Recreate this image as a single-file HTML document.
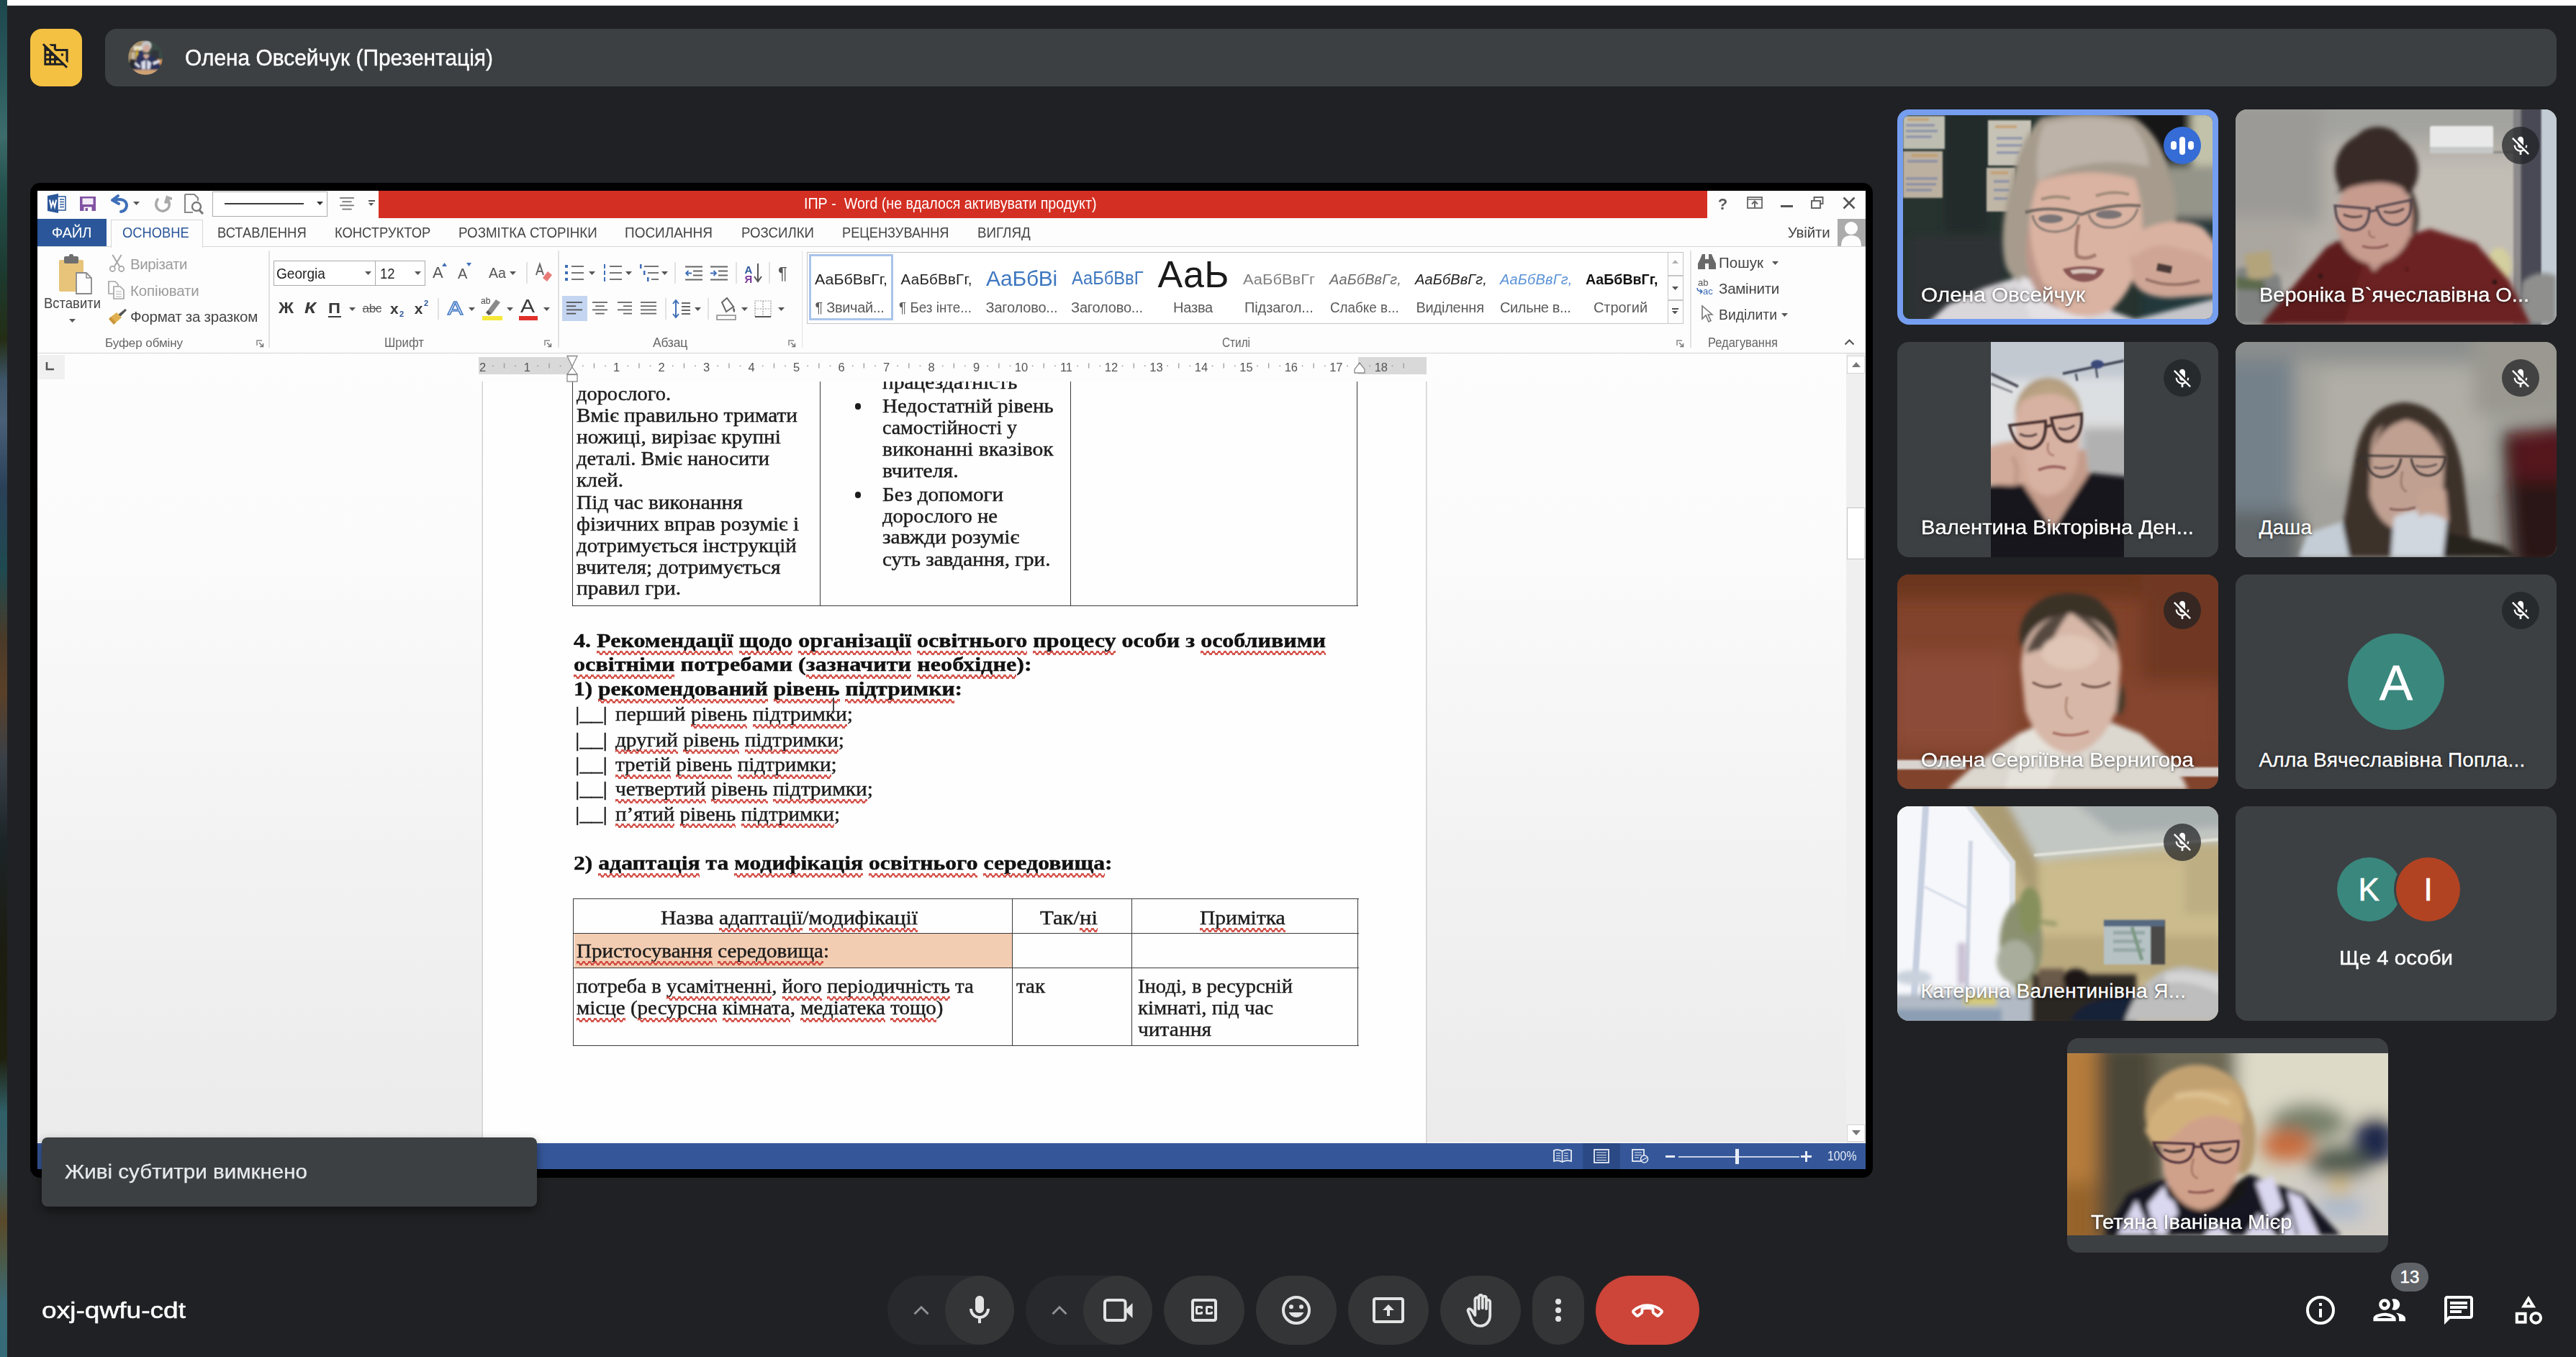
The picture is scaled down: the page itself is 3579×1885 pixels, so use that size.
<!DOCTYPE html>
<html lang="uk"><head><meta charset="utf-8"><title>Meet</title>
<style>
html,body{margin:0;padding:0}
body{width:3579px;height:1885px;background:#202124;position:relative;overflow:hidden;font-family:"Liberation Sans",sans-serif}
.a{position:absolute;display:block}
.t{position:absolute;white-space:nowrap;line-height:1;font-family:"Liberation Sans",sans-serif}
.f{font-family:"Liberation Serif",serif;-webkit-text-stroke:.450px currentColor}
.sq{height:6px;background:linear-gradient(45deg,transparent 37%,#cf3a32 37% 63%,transparent 63%) 0 0/8px 6px repeat-x,linear-gradient(-45deg,transparent 37%,#cf3a32 37% 63%,transparent 63%) 4px 0/8px 6px repeat-x;opacity:.85}
</style></head>
<body>
<div class="a" style="left:0;top:0;width:2640px;height:1700px;filter:blur(.550px)">
<div class="a" style="left:42.0px;top:254.0px;width:2560px;height:1382px;background:#000000;border-radius:14px;"></div>
<div class="a" style="left:52.0px;top:265.0px;width:2540px;height:1359px;background:#fdfdfd;"></div>
<div class="a" style="left:526.0px;top:265.0px;width:1846px;height:38px;background:#d42f23;"></div>
<div class="t" style="top:273.30px;font-size:21.5px;left:1116.50px;color:#ffffff;transform:scaleX(0.9150);transform-origin:0 50%;white-space:pre;">ІПР -  Word (не вдалося активувати продукт)</div>
<svg class="a" style="left:65.0px;top:268.0px;" width="28" height="29" viewBox="0 0 28 29"><path d="M1 4 L16 1 L16 28 L1 25Z" fill="#2b579a"/><rect x="15" y="5" width="11" height="19" fill="#fff" stroke="#2b579a" stroke-width="1.500"/><path d="M18 9h6M18 12.500h6M18 16h6M18 19.500h6" stroke="#2b579a" stroke-width="1.300"/><path d="M4 9.500 L6.200 19.500 L8.600 12 L11 19.500 L13.200 9.500" stroke="#fff" stroke-width="2" fill="none"/></svg>
<svg class="a" style="left:110.0px;top:272.0px;" width="24" height="22" viewBox="0 0 24 22"><path d="M1 1 H23 V21 H1Z" fill="#8152a3"/><rect x="4.500" y="3.500" width="15" height="8.500" fill="#f3ecf7"/><rect x="6.500" y="15.500" width="11" height="5.500" fill="#fdfdfd"/><rect x="8.500" y="17" width="3.500" height="4" fill="#8152a3"/></svg>
<svg class="a" style="left:152.0px;top:269.0px;" width="30" height="28" viewBox="0 0 30 28"><path d="M4 9 L12 3 M4 9 L13 14 M4.500 9 Q24 5 24 17 Q23 24 16 25" fill="none" stroke="#3f6fb8" stroke-width="4" stroke-linecap="round"/></svg>
<svg class="a" style="left:184.5px;top:280.0px;" width="9.0" height="5.0" viewBox="0 0 9.0 5.0"><path d="M0 0 L9.0 0 L4.5 5.0Z" fill="#555"/></svg>
<svg class="a" style="left:213.0px;top:269.0px;" width="26" height="28" viewBox="0 0 26 28"><path d="M19 5 Q19 12 19 12 M6 8 Q1 16 7 22 Q13 27 20 21 Q25 15 19 6 L17 12 M19 5 L25 7" fill="none" stroke="#a9a9a9" stroke-width="3.500" stroke-linecap="round"/></svg>
<svg class="a" style="left:255.0px;top:268.0px;" width="30" height="30" viewBox="0 0 30 30"><path d="M2 2 H15 L20 7 V11 M2 2 V27 H13" fill="none" stroke="#8a8a8a" stroke-width="2.200"/><circle cx="18" cy="19" r="6" fill="none" stroke="#777" stroke-width="2.400"/><path d="M22 24 L27 29" stroke="#777" stroke-width="3"/></svg>
<div class="a" style="left:295.0px;top:265.5px;width:160px;height:35px;background:#ffffff;border:1.500px solid #ababab;box-sizing:border-box;"></div>
<div class="a" style="left:312.0px;top:282.0px;width:110px;height:2px;background:#3a3a3a;"></div>
<svg class="a" style="left:439.5px;top:280.0px;" width="9.0" height="5.0" viewBox="0 0 9.0 5.0"><path d="M0 0 L9.0 0 L4.5 5.0Z" fill="#333"/></svg>
<svg class="a" style="left:471.0px;top:274.0px;" width="22" height="22" viewBox="0 0 22 22"><path d="M1.1 1.0 L20.9 1.0" stroke="#777" stroke-width="1.8"/><path d="M4.4 6.2 L17.6 6.2" stroke="#777" stroke-width="1.8"/><path d="M1.1 11.4 L20.9 11.4" stroke="#777" stroke-width="1.8"/><path d="M4.4 16.6 L17.6 16.6" stroke="#777" stroke-width="1.8"/></svg>
<div class="a" style="left:511.5px;top:278.0px;width:9px;height:1.5px;background:#555;"></div>
<svg class="a" style="left:512.4px;top:282.0px;" width="7.2" height="4.0" viewBox="0 0 7.2 4.0"><path d="M0 0 L7.2 0 L3.6 4.0Z" fill="#555"/></svg>
<div class="t" style="top:273.38px;font-size:22px;left:2386.77px;color:#5a5a5a;font-weight:bold;">?</div>
<svg class="a" style="left:2427.0px;top:273.0px;" width="22" height="17" viewBox="0 0 22 17"><rect x="1" y="1" width="20" height="15" fill="none" stroke="#666" stroke-width="1.800"/><path d="M1 4 H21" stroke="#666" stroke-width="1.500"/><path d="M11 15 V7 M7 10.500 L11 6.500 L15 10.500" fill="none" stroke="#666" stroke-width="2"/></svg>
<div class="a" style="left:2474.0px;top:285.0px;width:17px;height:2.5px;background:#555;"></div>
<svg class="a" style="left:2516.0px;top:273.0px;" width="18" height="17" viewBox="0 0 18 17"><rect x="4.500" y="1" width="12" height="9" fill="none" stroke="#666" stroke-width="2"/><rect x="1" y="6" width="12" height="10" fill="#fdfdfd" stroke="#666" stroke-width="2"/></svg>
<svg class="a" style="left:2560.0px;top:273.0px;" width="18" height="18" viewBox="0 0 18 18"><path d="M1.500 1.500 L16.500 16.500 M16.500 1.500 L1.500 16.500" stroke="#555" stroke-width="2.600"/></svg>
<div class="a" style="left:52.0px;top:304.0px;width:96px;height:38.5px;background:#2b579a;"></div>
<div class="t" style="top:313.15px;font-size:20.5px;left:71.70px;color:#ffffff;letter-spacing:-0.375px;">ФАЙЛ</div>
<div class="a" style="left:52.0px;top:341.5px;width:2540px;height:1.5px;background:#d6d6d6;"></div>
<div class="a" style="left:154.0px;top:305.0px;width:128px;height:38.5px;background:#fdfdfd;border:1.500px solid #d6d6d6;border-bottom:none;box-sizing:border-box;"></div>
<div class="t" style="top:313.15px;font-size:20.5px;left:170.00px;color:#2b579a;transform:scaleX(0.8943);transform-origin:0 50%;">ОСНОВНЕ</div>
<div class="t" style="top:313.15px;font-size:20.5px;left:302.00px;color:#444444;transform:scaleX(0.8988);transform-origin:0 50%;">ВСТАВЛЕННЯ</div>
<div class="t" style="top:313.15px;font-size:20.5px;left:464.80px;color:#444444;transform:scaleX(0.8969);transform-origin:0 50%;">КОНСТРУКТОР</div>
<div class="t" style="top:313.15px;font-size:20.5px;left:637.00px;color:#444444;transform:scaleX(0.9142);transform-origin:0 50%;">РОЗМІТКА СТОРІНКИ</div>
<div class="t" style="top:313.15px;font-size:20.5px;left:868.00px;color:#444444;transform:scaleX(0.9259);transform-origin:0 50%;">ПОСИЛАННЯ</div>
<div class="t" style="top:313.15px;font-size:20.5px;left:1030.00px;color:#444444;transform:scaleX(0.9099);transform-origin:0 50%;">РОЗСИЛКИ</div>
<div class="t" style="top:313.15px;font-size:20.5px;left:1169.60px;color:#444444;transform:scaleX(0.8879);transform-origin:0 50%;">РЕЦЕНЗУВАННЯ</div>
<div class="t" style="top:313.15px;font-size:20.5px;left:1357.90px;color:#444444;transform:scaleX(0.9155);transform-origin:0 50%;">ВИГЛЯД</div>
<div class="t" style="top:313.15px;font-size:20.5px;left:2483.70px;color:#444444;letter-spacing:-0.102px;">Увійти</div>
<svg class="a" style="left:2553.0px;top:304.0px;" width="39" height="38" viewBox="0 0 39 38"><rect width="40" height="38" fill="#ababab"/><circle cx="19" cy="13" r="9" fill="#fdfdfd"/><path d="M5 38 Q5 23 19 23 Q33 23 33 38Z" fill="#fdfdfd"/></svg>
<div class="a" style="left:52.0px;top:489.5px;width:2540px;height:1.5px;background:#d4d4d4;"></div>
<svg class="a" style="left:80.0px;top:353.0px;" width="50" height="56" viewBox="0 0 50 56"><rect x="2" y="8" width="34" height="44" rx="2" fill="#e8c47a"/><rect x="9" y="3" width="20" height="10" rx="2" fill="#6f6f6f"/><rect x="16" y="0" width="6" height="6" rx="2" fill="#6f6f6f"/><path d="M26 26 H40 L47 33 V55 H26Z" fill="#fdfdfd" stroke="#8a8a8a" stroke-width="1.800"/><path d="M40 26 V33 H47" fill="none" stroke="#8a8a8a" stroke-width="1.500"/></svg>
<div class="t" style="top:410.85px;font-size:20.5px;left:61.00px;color:#444444;transform:scaleX(0.9011);transform-origin:0 50%;">Вставити</div>
<svg class="a" style="left:96.0px;top:442.5px;" width="9.0" height="5.0" viewBox="0 0 9.0 5.0"><path d="M0 0 L9.0 0 L4.5 5.0Z" fill="#555"/></svg>
<svg class="a" style="left:150.5px;top:353.0px;" width="23" height="25" viewBox="0 0 26 28"><path d="M6 1 L17 19 M20 1 L9 19" stroke="#a5a5a5" stroke-width="2.200"/><circle cx="6" cy="23" r="4" fill="none" stroke="#a5a5a5" stroke-width="2"/><circle cx="20" cy="23" r="4" fill="none" stroke="#a5a5a5" stroke-width="2"/></svg>
<div class="t" style="top:356.95px;font-size:20.5px;left:181.00px;color:#9b9b9b;letter-spacing:-0.410px;">Вирізати</div>
<svg class="a" style="left:150.0px;top:390.0px;" width="24" height="26" viewBox="0 0 24 26"><path d="M1 1 H10 L14 5 V18 H1Z" fill="#fdfdfd" stroke="#a5a5a5" stroke-width="1.700"/><path d="M8 8 H17 L22 13 V25 H8Z" fill="#fdfdfd" stroke="#a5a5a5" stroke-width="1.700"/><path d="M11 15h8M11 18.500h8M11 22h8" stroke="#b5b5b5" stroke-width="1.200"/></svg>
<div class="t" style="top:394.05px;font-size:20.5px;left:181.00px;color:#9b9b9b;letter-spacing:-0.136px;">Копіювати</div>
<svg class="a" style="left:150.0px;top:428.0px;" width="26" height="24" viewBox="0 0 26 24"><path d="M14 9 L24 1 L26 3 L17 12Z" fill="#555"/><path d="M3 13 L12 6 L19 13 L10 21Z" fill="#e0b050"/><path d="M1 15 L4 12 L11 20 L8 23Z" fill="#c9953a"/></svg>
<div class="t" style="top:429.65px;font-size:20.5px;left:181.00px;color:#444444;letter-spacing:-0.240px;">Формат за зразком</div>
<div class="t" style="top:468.11px;font-size:17px;left:146.00px;color:#666666;letter-spacing:-0.074px;">Буфер обміну</div>
<svg class="a" style="left:355.5px;top:472.0px;" width="11" height="11" viewBox="0 0 11 11"><path d="M1 8 V1 H8" fill="none" stroke="#888" stroke-width="1.500"/><path d="M4 4 L9.500 9.500 M9.500 5 V9.500 H5" fill="none" stroke="#777" stroke-width="1.500"/></svg>
<div class="a" style="left:373.0px;top:348.0px;width:1.5px;height:135px;background:#e2e2e2;"></div>
<div class="a" style="left:380.0px;top:362.0px;width:142.5px;height:35px;background:#ffffff;border:1.500px solid #ababab;box-sizing:border-box;"></div>
<div class="t" style="top:368.72px;font-size:21px;left:384.00px;color:#222;transform:scaleX(0.9101);transform-origin:0 50%;">Georgia</div>
<svg class="a" style="left:507.0px;top:376.5px;" width="9.0" height="5.0" viewBox="0 0 9.0 5.0"><path d="M0 0 L9.0 0 L4.5 5.0Z" fill="#555"/></svg>
<div class="a" style="left:521.0px;top:362.0px;width:70px;height:35px;background:#ffffff;border:1.500px solid #ababab;box-sizing:border-box;"></div>
<div class="t" style="top:368.72px;font-size:21px;left:527.70px;color:#222;transform:scaleX(0.8776);transform-origin:0 50%;">12</div>
<svg class="a" style="left:575.5px;top:376.5px;" width="9.0" height="5.0" viewBox="0 0 9.0 5.0"><path d="M0 0 L9.0 0 L4.5 5.0Z" fill="#555"/></svg>
<div class="t" style="top:368.38px;font-size:22px;left:601.00px;color:#555;">A</div>
<svg class="a" style="left:613.5px;top:365.0px;" width="7" height="5" viewBox="0 0 7 5"><path d="M0 5 L7 5 L3.500 0Z" fill="#3f6fb8"/></svg>
<div class="t" style="top:370.07px;font-size:20px;left:636.00px;color:#555;">A</div>
<svg class="a" style="left:647.5px;top:365.0px;" width="7" height="5" viewBox="0 0 7 5"><path d="M0 0 L7 0 L3.500 5Z" fill="#3f6fb8"/></svg>
<div class="t" style="top:369.15px;font-size:20.5px;left:679.00px;color:#555;transform:scaleX(0.9570);transform-origin:0 50%;">Aa</div>
<svg class="a" style="left:707.5px;top:376.5px;" width="9.0" height="5.0" viewBox="0 0 9.0 5.0"><path d="M0 0 L9.0 0 L4.5 5.0Z" fill="#555"/></svg>
<div class="a" style="left:731.0px;top:364.0px;width:1.5px;height:30px;background:#e2e2e2;"></div>
<svg class="a" style="left:742.0px;top:364.0px;" width="26" height="30" viewBox="0 0 26 30"><path d="M3 18 L8 3 L13 18 M5 13 H11" fill="none" stroke="#666" stroke-width="2"/><path d="M12 22 L19 13 L25 18 L18 27Z" fill="#e87a78"/></svg>
<div class="t" style="top:417.38px;font-size:22px;left:387.00px;color:#3a3a3a;font-weight:bold;transform:scaleX(1.0558);transform-origin:0 50%;">Ж</div>
<div class="t" style="top:417.38px;font-size:22px;left:423.00px;color:#3a3a3a;font-weight:bold;font-style:italic;transform:scaleX(1.1824);transform-origin:0 50%;">К</div>
<div class="t" style="top:416.72px;font-size:21px;left:456.00px;color:#3a3a3a;font-weight:bold;transform:scaleX(1.1263);transform-origin:0 50%;">П</div>
<div class="a" style="left:456.0px;top:438.5px;width:18px;height:2px;background:#3a3a3a;"></div>
<svg class="a" style="left:485.0px;top:426.5px;" width="9.0" height="5.0" viewBox="0 0 9.0 5.0"><path d="M0 0 L9.0 0 L4.5 5.0Z" fill="#555"/></svg>
<div class="t" style="top:419.61px;font-size:17px;left:503.50px;color:#555;letter-spacing:-0.307px;text-decoration:line-through;">abc</div>
<div class="t" style="top:417.72px;font-size:21px;left:542.00px;color:#3a3a3a;font-weight:bold;">x</div>
<div class="t" style="top:430.69px;font-size:11px;left:555.00px;color:#2b579a;font-weight:bold;">2</div>
<div class="t" style="top:417.72px;font-size:21px;left:575.70px;color:#3a3a3a;font-weight:bold;">x</div>
<div class="t" style="top:415.69px;font-size:11px;left:589.00px;color:#2b579a;font-weight:bold;">2</div>
<div class="a" style="left:608.0px;top:414.0px;width:1.5px;height:30px;background:#e2e2e2;"></div>
<div class="t" style="top:414.99px;font-size:26px;left:622.00px;color:#fdfdfd;transform:scaleX(1.2108);transform-origin:0 50%;-webkit-text-stroke:1.500px #4a7fc8;">A</div>
<svg class="a" style="left:650.5px;top:426.5px;" width="9.0" height="5.0" viewBox="0 0 9.0 5.0"><path d="M0 0 L9.0 0 L4.5 5.0Z" fill="#555"/></svg>
<svg class="a" style="left:669.0px;top:412.0px;" width="30" height="34" viewBox="0 0 30 34"><path d="M8 20 L20 4 L26 8 L14 24Z" fill="#8a8a8a"/><path d="M6 22 L9 19 L14 24 L10 26Z" fill="#555"/><rect x="1" y="27" width="28" height="6" fill="#f5e83a"/></svg>
<div class="t" style="top:411.84px;font-size:12px;left:668.00px;color:#444;">ab</div>
<svg class="a" style="left:704.0px;top:426.5px;" width="9.0" height="5.0" viewBox="0 0 9.0 5.0"><path d="M0 0 L9.0 0 L4.5 5.0Z" fill="#555"/></svg>
<div class="t" style="top:412.84px;font-size:25px;left:723.00px;color:#3a3a3a;transform:scaleX(1.1985);transform-origin:0 50%;">A</div>
<div class="a" style="left:721.0px;top:438.5px;width:26px;height:6px;background:#e0302a;"></div>
<svg class="a" style="left:755.2px;top:426.5px;" width="9.0" height="5.0" viewBox="0 0 9.0 5.0"><path d="M0 0 L9.0 0 L4.5 5.0Z" fill="#555"/></svg>
<div class="t" style="top:467.69px;font-size:17.5px;left:533.80px;color:#666666;transform:scaleX(0.9552);transform-origin:0 50%;">Шрифт</div>
<svg class="a" style="left:756.0px;top:472.0px;" width="11" height="11" viewBox="0 0 11 11"><path d="M1 8 V1 H8" fill="none" stroke="#888" stroke-width="1.500"/><path d="M4 4 L9.500 9.500 M9.500 5 V9.500 H5" fill="none" stroke="#777" stroke-width="1.500"/></svg>
<div class="a" style="left:775.0px;top:348.0px;width:1.5px;height:135px;background:#e2e2e2;"></div>
<svg class="a" style="left:785.0px;top:367.0px;" width="27" height="26" viewBox="0 0 27 26"><rect x="0" y="1" width="4" height="4" fill="#3f6fb8"/><path d="M9 3 H26" stroke="#666" stroke-width="1.800"/><rect x="0" y="10" width="4" height="4" fill="#3f6fb8"/><path d="M9 12 H26" stroke="#666" stroke-width="1.800"/><rect x="0" y="19" width="4" height="4" fill="#3f6fb8"/><path d="M9 21 H26" stroke="#666" stroke-width="1.800"/></svg>
<svg class="a" style="left:818.1px;top:376.5px;" width="9.0" height="5.0" viewBox="0 0 9.0 5.0"><path d="M0 0 L9.0 0 L4.5 5.0Z" fill="#555"/></svg>
<svg class="a" style="left:837.5px;top:367.0px;" width="27" height="26" viewBox="0 0 27 26"><rect x="1" y="0" width="2" height="6" fill="#3f6fb8"/><path d="M9 3 H26" stroke="#666" stroke-width="1.800"/><rect x="1" y="9" width="2" height="6" fill="#3f6fb8"/><path d="M9 12 H26" stroke="#666" stroke-width="1.800"/><rect x="1" y="18" width="2" height="6" fill="#3f6fb8"/><path d="M9 21 H26" stroke="#666" stroke-width="1.800"/></svg>
<svg class="a" style="left:869.3px;top:376.5px;" width="9.0" height="5.0" viewBox="0 0 9.0 5.0"><path d="M0 0 L9.0 0 L4.5 5.0Z" fill="#555"/></svg>
<svg class="a" style="left:888.7px;top:367.0px;" width="27" height="26" viewBox="0 0 27 26"><rect x="0" y="0" width="2.500" height="6" fill="#3f6fb8"/><path d="M6 3 H26" stroke="#666" stroke-width="1.800"/><rect x="5" y="9" width="2.500" height="6" fill="#3f6fb8"/><path d="M11 12 H26" stroke="#666" stroke-width="1.800"/><rect x="10" y="18" width="2.500" height="6" fill="#3f6fb8"/><path d="M16 21 H26" stroke="#666" stroke-width="1.800"/></svg>
<svg class="a" style="left:919.2px;top:376.5px;" width="9.0" height="5.0" viewBox="0 0 9.0 5.0"><path d="M0 0 L9.0 0 L4.5 5.0Z" fill="#555"/></svg>
<div class="a" style="left:937.0px;top:364.0px;width:1.5px;height:30px;background:#e2e2e2;"></div>
<svg class="a" style="left:952.0px;top:369.0px;" width="24" height="22" viewBox="0 0 24 22"><path d="M0 1.500 H24 M11 7.500 H24 M11 13.500 H24 M0 19.500 H24" stroke="#666" stroke-width="1.800"/><path d="M9 10.500 H1 M4.500 7 L1 10.500 L4.500 14" fill="none" stroke="#3f6fb8" stroke-width="1.800"/></svg>
<svg class="a" style="left:986.6px;top:369.0px;" width="24" height="22" viewBox="0 0 24 22"><path d="M0 1.500 H24 M11 7.500 H24 M11 13.500 H24 M0 19.500 H24" stroke="#666" stroke-width="1.800"/><path d="M0 10.500 H8 M4.500 7 L8 10.500 L4.500 14" fill="none" stroke="#3f6fb8" stroke-width="1.800"/></svg>
<div class="a" style="left:1022.0px;top:364.0px;width:1.5px;height:30px;background:#e2e2e2;"></div>
<div class="t" style="top:367.30px;font-size:15px;left:1034.60px;color:#2b579a;font-weight:bold;">A</div>
<div class="t" style="top:380.30px;font-size:15px;left:1034.60px;color:#7a3a9a;font-weight:bold;">Я</div>
<svg class="a" style="left:1047.0px;top:365.0px;" width="12" height="28" viewBox="0 0 12 28"><path d="M6 1 V25 M1 19 L6 26 L11 19" fill="none" stroke="#555" stroke-width="2"/></svg>
<div class="a" style="left:1068.0px;top:364.0px;width:1.5px;height:30px;background:#e2e2e2;"></div>
<div class="t" style="top:367.68px;font-size:24px;left:1081.00px;color:#555;">¶</div>
<div class="a" style="left:781.0px;top:411.0px;width:35px;height:35px;background:#c3d5f0;"></div>
<svg class="a" style="left:787.0px;top:419.0px;" width="22" height="22" viewBox="0 0 22 22"><path d="M0.0 1.0 L22.0 1.0" stroke="#555" stroke-width="1.8"/><path d="M0.0 6.2 L13.2 6.2" stroke="#555" stroke-width="1.8"/><path d="M0.0 11.4 L22.0 11.4" stroke="#555" stroke-width="1.8"/><path d="M0.0 16.6 L13.2 16.6" stroke="#555" stroke-width="1.8"/></svg>
<svg class="a" style="left:822.6px;top:419.0px;" width="21" height="22" viewBox="0 0 21 22"><path d="M0.0 1.0 L21.0 1.0" stroke="#666" stroke-width="1.8"/><path d="M4.2 6.2 L16.8 6.2" stroke="#666" stroke-width="1.8"/><path d="M0.0 11.4 L21.0 11.4" stroke="#666" stroke-width="1.8"/><path d="M4.2 16.6 L16.8 16.6" stroke="#666" stroke-width="1.8"/></svg>
<svg class="a" style="left:857.5px;top:419.0px;" width="20" height="22" viewBox="0 0 20 22"><path d="M0.0 1.0 L20.0 1.0" stroke="#666" stroke-width="1.8"/><path d="M8.0 6.2 L20.0 6.2" stroke="#666" stroke-width="1.8"/><path d="M0.0 11.4 L20.0 11.4" stroke="#666" stroke-width="1.8"/><path d="M8.0 16.6 L20.0 16.6" stroke="#666" stroke-width="1.8"/></svg>
<svg class="a" style="left:890.0px;top:419.0px;" width="22" height="22" viewBox="0 0 22 22"><path d="M0.0 1.0 L22.0 1.0" stroke="#666" stroke-width="1.8"/><path d="M0.0 6.2 L22.0 6.2" stroke="#666" stroke-width="1.8"/><path d="M0.0 11.4 L22.0 11.4" stroke="#666" stroke-width="1.8"/><path d="M0.0 16.6 L22.0 16.6" stroke="#666" stroke-width="1.8"/></svg>
<div class="a" style="left:924.0px;top:414.0px;width:1.5px;height:30px;background:#e2e2e2;"></div>
<svg class="a" style="left:934.0px;top:415.0px;" width="26" height="28" viewBox="0 0 26 28"><path d="M5 3 V25 M1 7 L5 2 L9 7 M1 21 L5 26 L9 21" fill="none" stroke="#3f6fb8" stroke-width="2"/><path d="M13 6h12M13 11h12M13 16h12M13 21h12" stroke="#666" stroke-width="1.800"/></svg>
<svg class="a" style="left:964.5px;top:426.5px;" width="9.0" height="5.0" viewBox="0 0 9.0 5.0"><path d="M0 0 L9.0 0 L4.5 5.0Z" fill="#555"/></svg>
<div class="a" style="left:983.0px;top:414.0px;width:1.5px;height:30px;background:#e2e2e2;"></div>
<svg class="a" style="left:995.0px;top:412.0px;" width="30" height="34" viewBox="0 0 30 34"><path d="M8 8 L15 2 L24 14 L14 21Z" fill="#fdfdfd" stroke="#666" stroke-width="2"/><path d="M24 14 Q28 20 25 22 Q22 20 24 14" fill="#666"/><rect x="1" y="26" width="26" height="6" fill="#fdfdfd" stroke="#888" stroke-width="1.500"/></svg>
<svg class="a" style="left:1030.1px;top:426.5px;" width="9.0" height="5.0" viewBox="0 0 9.0 5.0"><path d="M0 0 L9.0 0 L4.5 5.0Z" fill="#555"/></svg>
<svg class="a" style="left:1048.0px;top:417.0px;" width="24" height="24" viewBox="0 0 24 24"><rect x="1" y="1" width="22" height="22" fill="none" stroke="#999" stroke-width="1.200" stroke-dasharray="2 1.500"/><path d="M12 1 V23 M1 12 H23" stroke="#999" stroke-width="1.200" stroke-dasharray="2 1.500"/><path d="M1 23 H23" stroke="#555" stroke-width="2"/></svg>
<svg class="a" style="left:1081.3px;top:426.5px;" width="9.0" height="5.0" viewBox="0 0 9.0 5.0"><path d="M0 0 L9.0 0 L4.5 5.0Z" fill="#555"/></svg>
<div class="t" style="top:467.69px;font-size:17.5px;left:907.00px;color:#666666;letter-spacing:-0.219px;">Абзац</div>
<svg class="a" style="left:1094.8px;top:472.0px;" width="11" height="11" viewBox="0 0 11 11"><path d="M1 8 V1 H8" fill="none" stroke="#888" stroke-width="1.500"/><path d="M4 4 L9.500 9.500 M9.500 5 V9.500 H5" fill="none" stroke="#777" stroke-width="1.500"/></svg>
<div class="a" style="left:1113.7px;top:348.0px;width:1.5px;height:135px;background:#e2e2e2;"></div>
<div class="a" style="left:1120.5px;top:350.0px;width:1218px;height:100px;background:#ffffff;border:1.500px solid #c6c6c6;box-sizing:border-box;"></div>
<div class="a" style="left:1123.5px;top:353.0px;width:117px;height:92px;background:#ffffff;border:3px solid #a9c4ea;box-sizing:border-box;"></div>
<div class="t" style="top:377.65px;font-size:20.5px;left:1132.00px;color:#222;transform:scaleX(1.0429);transform-origin:0 50%;">АаБбВвГг,</div>
<div class="t" style="top:417.07px;font-size:20px;left:1132.50px;color:#5a5a5a;letter-spacing:-0.324px;">¶ Звичай...</div>
<div class="t" style="top:377.65px;font-size:20.5px;left:1251.60px;color:#222;letter-spacing:0.240px;">АаБбВвГг,</div>
<div class="t" style="top:417.07px;font-size:20px;left:1249.00px;color:#5a5a5a;transform:scaleX(0.9434);transform-origin:0 50%;">¶ Без інте...</div>
<div class="t" style="top:371.61px;font-size:30px;left:1370.00px;color:#3f78c0;letter-spacing:-0.263px;">АаБбВі</div>
<div class="t" style="top:417.07px;font-size:20px;left:1369.50px;color:#5a5a5a;letter-spacing:-0.178px;">Заголово...</div>
<div class="t" style="top:373.84px;font-size:25px;left:1489.00px;color:#3f78c0;transform:scaleX(0.9469);transform-origin:0 50%;">АаБбВвГ</div>
<div class="t" style="top:417.07px;font-size:20px;left:1488.00px;color:#5a5a5a;letter-spacing:-0.178px;">Заголово...</div>
<div class="t" style="top:354.98px;font-size:52px;left:1608.60px;color:#1a1a1a;letter-spacing:0.229px;">АаЬ</div>
<div class="t" style="top:417.07px;font-size:20px;left:1630.00px;color:#5a5a5a;letter-spacing:-0.209px;">Назва</div>
<div class="t" style="top:377.65px;font-size:20.5px;left:1727.00px;color:#808080;transform:scaleX(1.0677);transform-origin:0 50%;">АаБбВвГг</div>
<div class="t" style="top:417.07px;font-size:20px;left:1729.00px;color:#5a5a5a;letter-spacing:-0.097px;">Підзагол...</div>
<div class="t" style="top:378.07px;font-size:20px;left:1847.00px;color:#6a6a6a;font-style:italic;letter-spacing:0.110px;">АаБбВвГг,</div>
<div class="t" style="top:417.07px;font-size:20px;left:1848.00px;color:#5a5a5a;transform:scaleX(0.9406);transform-origin:0 50%;">Слабке в...</div>
<div class="t" style="top:378.07px;font-size:20px;left:1966.00px;color:#222;font-style:italic;letter-spacing:0.132px;">АаБбВвГг,</div>
<div class="t" style="top:417.07px;font-size:20px;left:1967.40px;color:#5a5a5a;letter-spacing:-0.216px;">Виділення</div>
<div class="t" style="top:378.07px;font-size:20px;left:2084.00px;color:#5a92d6;font-style:italic;letter-spacing:0.188px;">АаБбВвГг,</div>
<div class="t" style="top:417.07px;font-size:20px;left:2084.00px;color:#5a5a5a;letter-spacing:-0.385px;">Сильне в...</div>
<div class="t" style="top:377.65px;font-size:20.5px;left:2203.00px;color:#111;font-weight:bold;transform:scaleX(0.9542);transform-origin:0 50%;">АаБбВвГг,</div>
<div class="t" style="top:417.07px;font-size:20px;left:2214.00px;color:#5a5a5a;letter-spacing:-0.071px;">Строгий</div>
<div class="a" style="left:2316.5px;top:350.0px;width:22px;height:33.4px;background:#fdfdfd;border:1.500px solid #c6c6c6;box-sizing:border-box;"></div>
<div class="a" style="left:2316.5px;top:383.3px;width:22px;height:33.4px;background:#fdfdfd;border:1.500px solid #c6c6c6;box-sizing:border-box;"></div>
<div class="a" style="left:2316.5px;top:416.6px;width:22px;height:33.4px;background:#fdfdfd;border:1.500px solid #c6c6c6;box-sizing:border-box;"></div>
<svg class="a" style="left:2323.0px;top:361.0px;" width="9" height="5" viewBox="0 0 9 5"><path d="M0 5 L9 5 L4.500 0Z" fill="#b0b0b0"/></svg>
<svg class="a" style="left:2323.0px;top:397.5px;" width="9.0" height="5.0" viewBox="0 0 9.0 5.0"><path d="M0 0 L9.0 0 L4.5 5.0Z" fill="#555"/></svg>
<div class="a" style="left:2323.0px;top:428.0px;width:9px;height:1.5px;background:#555;"></div>
<svg class="a" style="left:2323.45px;top:431.75px;" width="8.1" height="4.5" viewBox="0 0 8.1 4.5"><path d="M0 0 L8.1 0 L4.05 4.5Z" fill="#555"/></svg>
<div class="t" style="top:467.69px;font-size:17.5px;left:1697.70px;color:#666666;transform:scaleX(0.8758);transform-origin:0 50%;">Стилі</div>
<svg class="a" style="left:2329.4px;top:472.0px;" width="11" height="11" viewBox="0 0 11 11"><path d="M1 8 V1 H8" fill="none" stroke="#888" stroke-width="1.500"/><path d="M4 4 L9.500 9.500 M9.500 5 V9.500 H5" fill="none" stroke="#777" stroke-width="1.500"/></svg>
<div class="a" style="left:2348.0px;top:348.0px;width:1.5px;height:135px;background:#e2e2e2;"></div>
<svg class="a" style="left:2358.0px;top:352.0px;" width="27" height="24" viewBox="0 0 27 24"><path d="M4 8 L7 1 H11 V22 H1 V14Z M23 8 L20 1 H16 V22 H26 V14Z" fill="#6a6a6a"/><rect x="11" y="8" width="5" height="6" fill="#6a6a6a"/></svg>
<div class="t" style="top:355.15px;font-size:20.5px;left:2388.00px;color:#444444;letter-spacing:0.037px;">Пошук</div>
<svg class="a" style="left:2461.5px;top:362.5px;" width="9.0" height="5.0" viewBox="0 0 9.0 5.0"><path d="M0 0 L9.0 0 L4.5 5.0Z" fill="#555"/></svg>
<div class="t" style="top:386.00px;font-size:13px;left:2359.00px;color:#555;">ab</div>
<div class="t" style="top:398.00px;font-size:13px;left:2366.00px;color:#3f6fb8;">ac</div>
<svg class="a" style="left:2357.0px;top:399.0px;" width="10" height="10" viewBox="0 0 10 10"><path d="M1 1 Q1 6 8 6 M5 3 L8 6 L5 9" fill="none" stroke="#3f6fb8" stroke-width="1.500"/></svg>
<div class="t" style="top:391.15px;font-size:20.5px;left:2388.00px;color:#444444;letter-spacing:-0.256px;">Замінити</div>
<svg class="a" style="left:2363.0px;top:423.0px;" width="18" height="26" viewBox="0 0 18 26"><path d="M2 2 L2 20 L7 15 L11 24 L14 22.500 L10 14 L16 14Z" fill="#fdfdfd" stroke="#777" stroke-width="1.600"/></svg>
<div class="t" style="top:426.65px;font-size:20.5px;left:2388.00px;color:#444444;transform:scaleX(0.9429);transform-origin:0 50%;">Виділити</div>
<svg class="a" style="left:2474.5px;top:434.5px;" width="9.0" height="5.0" viewBox="0 0 9.0 5.0"><path d="M0 0 L9.0 0 L4.5 5.0Z" fill="#555"/></svg>
<div class="t" style="top:467.69px;font-size:17.5px;left:2373.00px;color:#666666;transform:scaleX(0.9420);transform-origin:0 50%;">Редагування</div>
<svg class="a" style="left:2562.0px;top:470.0px;" width="15" height="10" viewBox="0 0 15 10"><path d="M1.500 8.500 L7.500 2.500 L13.500 8.500" fill="none" stroke="#555" stroke-width="2.200"/></svg>
<div class="a" style="left:52.0px;top:491.0px;width:2540px;height:1096px;background:linear-gradient(180deg,#fdfdfd 0,#fbfbfb 25%,#f3f3f3 60%,#ebebeb 100%);"></div>
<div class="a" style="left:52.0px;top:493.0px;width:38px;height:34px;background:#f0f0f0;"></div>
<svg class="a" style="left:61.0px;top:501.0px;" width="16" height="16" viewBox="0 0 16 16"><path d="M4 2 V12 H14" fill="none" stroke="#555" stroke-width="2.600"/></svg>
<div class="a" style="left:665.0px;top:496.0px;width:1317px;height:24px;background:#d9d9d9;"></div>
<div class="a" style="left:795.0px;top:496.0px;width:1092px;height:24px;background:#fdfdfd;"></div>
<div class="t" style="top:502.03px;font-size:16.5px;left:666.01px;color:#555;">2</div>
<div class="t" style="top:502.03px;font-size:16.5px;left:727.81px;color:#555;">1</div>
<div class="t" style="top:502.03px;font-size:16.5px;left:852.09px;color:#555;">1</div>
<div class="t" style="top:502.03px;font-size:16.5px;left:914.57px;color:#555;">2</div>
<div class="t" style="top:502.03px;font-size:16.5px;left:977.05px;color:#555;">3</div>
<div class="t" style="top:502.03px;font-size:16.5px;left:1039.53px;color:#555;">4</div>
<div class="t" style="top:502.03px;font-size:16.5px;left:1102.01px;color:#555;">5</div>
<div class="t" style="top:502.03px;font-size:16.5px;left:1164.49px;color:#555;">6</div>
<div class="t" style="top:502.03px;font-size:16.5px;left:1226.97px;color:#555;">7</div>
<div class="t" style="top:502.03px;font-size:16.5px;left:1289.45px;color:#555;">8</div>
<div class="t" style="top:502.03px;font-size:16.5px;left:1351.93px;color:#555;">9</div>
<div class="t" style="top:502.03px;font-size:16.5px;left:1409.82px;color:#555;">10</div>
<div class="t" style="top:502.03px;font-size:16.5px;left:1472.91px;color:#555;">11</div>
<div class="t" style="top:502.03px;font-size:16.5px;left:1534.78px;color:#555;">12</div>
<div class="t" style="top:502.03px;font-size:16.5px;left:1597.26px;color:#555;">13</div>
<div class="t" style="top:502.03px;font-size:16.5px;left:1659.74px;color:#555;">14</div>
<div class="t" style="top:502.03px;font-size:16.5px;left:1722.22px;color:#555;">15</div>
<div class="t" style="top:502.03px;font-size:16.5px;left:1784.70px;color:#555;">16</div>
<div class="t" style="top:502.03px;font-size:16.5px;left:1847.18px;color:#555;">17</div>
<div class="t" style="top:502.03px;font-size:16.5px;left:1909.66px;color:#555;">18</div>
<svg class="a" style="left:665.0px;top:496.0px;" width="1317" height="24" viewBox="0 0 1317 24"><rect x="19.1" y="11.500" width="1.600" height="1.600" fill="#9a9a9a"/><rect x="34.9" y="8.500" width="1.300" height="7" fill="#9a9a9a"/><rect x="50.3" y="11.500" width="1.600" height="1.600" fill="#9a9a9a"/><rect x="81.5" y="11.500" width="1.600" height="1.600" fill="#9a9a9a"/><rect x="97.4" y="8.500" width="1.300" height="7" fill="#9a9a9a"/><rect x="112.8" y="11.500" width="1.600" height="1.600" fill="#9a9a9a"/><rect x="144.0" y="11.500" width="1.600" height="1.600" fill="#9a9a9a"/><rect x="159.8" y="8.500" width="1.300" height="7" fill="#9a9a9a"/><rect x="175.3" y="11.500" width="1.600" height="1.600" fill="#9a9a9a"/><rect x="206.5" y="11.500" width="1.600" height="1.600" fill="#9a9a9a"/><rect x="222.3" y="8.500" width="1.300" height="7" fill="#9a9a9a"/><rect x="237.7" y="11.500" width="1.600" height="1.600" fill="#9a9a9a"/><rect x="269.0" y="11.500" width="1.600" height="1.600" fill="#9a9a9a"/><rect x="284.8" y="8.500" width="1.300" height="7" fill="#9a9a9a"/><rect x="300.2" y="11.500" width="1.600" height="1.600" fill="#9a9a9a"/><rect x="331.5" y="11.500" width="1.600" height="1.600" fill="#9a9a9a"/><rect x="347.3" y="8.500" width="1.300" height="7" fill="#9a9a9a"/><rect x="362.7" y="11.500" width="1.600" height="1.600" fill="#9a9a9a"/><rect x="393.9" y="11.500" width="1.600" height="1.600" fill="#9a9a9a"/><rect x="409.8" y="8.500" width="1.300" height="7" fill="#9a9a9a"/><rect x="425.2" y="11.500" width="1.600" height="1.600" fill="#9a9a9a"/><rect x="456.4" y="11.500" width="1.600" height="1.600" fill="#9a9a9a"/><rect x="472.2" y="8.500" width="1.300" height="7" fill="#9a9a9a"/><rect x="487.7" y="11.500" width="1.600" height="1.600" fill="#9a9a9a"/><rect x="518.9" y="11.500" width="1.600" height="1.600" fill="#9a9a9a"/><rect x="534.7" y="8.500" width="1.300" height="7" fill="#9a9a9a"/><rect x="550.1" y="11.500" width="1.600" height="1.600" fill="#9a9a9a"/><rect x="581.4" y="11.500" width="1.600" height="1.600" fill="#9a9a9a"/><rect x="597.2" y="8.500" width="1.300" height="7" fill="#9a9a9a"/><rect x="612.6" y="11.500" width="1.600" height="1.600" fill="#9a9a9a"/><rect x="643.9" y="11.500" width="1.600" height="1.600" fill="#9a9a9a"/><rect x="659.7" y="8.500" width="1.300" height="7" fill="#9a9a9a"/><rect x="675.1" y="11.500" width="1.600" height="1.600" fill="#9a9a9a"/><rect x="706.3" y="11.500" width="1.600" height="1.600" fill="#9a9a9a"/><rect x="722.2" y="8.500" width="1.300" height="7" fill="#9a9a9a"/><rect x="737.6" y="11.500" width="1.600" height="1.600" fill="#9a9a9a"/><rect x="768.8" y="11.500" width="1.600" height="1.600" fill="#9a9a9a"/><rect x="784.6" y="8.500" width="1.300" height="7" fill="#9a9a9a"/><rect x="800.1" y="11.500" width="1.600" height="1.600" fill="#9a9a9a"/><rect x="831.3" y="11.500" width="1.600" height="1.600" fill="#9a9a9a"/><rect x="847.1" y="8.500" width="1.300" height="7" fill="#9a9a9a"/><rect x="862.5" y="11.500" width="1.600" height="1.600" fill="#9a9a9a"/><rect x="893.8" y="11.500" width="1.600" height="1.600" fill="#9a9a9a"/><rect x="909.6" y="8.500" width="1.300" height="7" fill="#9a9a9a"/><rect x="925.0" y="11.500" width="1.600" height="1.600" fill="#9a9a9a"/><rect x="956.3" y="11.500" width="1.600" height="1.600" fill="#9a9a9a"/><rect x="972.1" y="8.500" width="1.300" height="7" fill="#9a9a9a"/><rect x="987.5" y="11.500" width="1.600" height="1.600" fill="#9a9a9a"/><rect x="1018.7" y="11.500" width="1.600" height="1.600" fill="#9a9a9a"/><rect x="1034.6" y="8.500" width="1.300" height="7" fill="#9a9a9a"/><rect x="1050.0" y="11.500" width="1.600" height="1.600" fill="#9a9a9a"/><rect x="1081.2" y="11.500" width="1.600" height="1.600" fill="#9a9a9a"/><rect x="1097.0" y="8.500" width="1.300" height="7" fill="#9a9a9a"/><rect x="1112.5" y="11.500" width="1.600" height="1.600" fill="#9a9a9a"/><rect x="1143.7" y="11.500" width="1.600" height="1.600" fill="#9a9a9a"/><rect x="1159.5" y="8.500" width="1.300" height="7" fill="#9a9a9a"/><rect x="1174.9" y="11.500" width="1.600" height="1.600" fill="#9a9a9a"/><rect x="1206.2" y="11.500" width="1.600" height="1.600" fill="#9a9a9a"/><rect x="1222.0" y="8.500" width="1.300" height="7" fill="#9a9a9a"/><rect x="1237.4" y="11.500" width="1.600" height="1.600" fill="#9a9a9a"/><rect x="1268.7" y="11.500" width="1.600" height="1.600" fill="#9a9a9a"/><rect x="1284.5" y="8.500" width="1.300" height="7" fill="#9a9a9a"/></svg>
<div class="a" style="left:2565.0px;top:491.0px;width:27px;height:1098px;background:#efefef;"></div>
<div class="a" style="left:2566.0px;top:493.5px;width:24.5px;height:25px;background:#ffffff;border:1.500px solid #d4d4d4;box-sizing:border-box;"></div>
<svg class="a" style="left:2572.5px;top:503.0px;" width="12" height="7" viewBox="0 0 12 7"><path d="M0 7 L12 7 L6 0Z" fill="#777"/></svg>
<div class="a" style="left:2566.0px;top:705.0px;width:24.5px;height:72px;background:#ffffff;border:1.500px solid #c6c6c6;box-sizing:border-box;"></div>
<div class="a" style="left:2566.0px;top:1561.5px;width:24.5px;height:24px;background:#ffffff;border:1.500px solid #d4d4d4;box-sizing:border-box;"></div>
<svg class="a" style="left:2572.5px;top:1570.0px;" width="12" height="7" viewBox="0 0 12 7"><path d="M0 0 L12 0 L6 7Z" fill="#777"/></svg>
<div class="a" style="left:52.0px;top:530.0px;width:2513px;height:1059px;overflow:hidden;">
<div class="a" style="left:619px;top:-20px;width:1310px;height:1080px;background:#fefefe;box-shadow:0 0 0 1.500px #d2d2d2;"></div>
<div class="a" style="left:743px;top:0px;width:1.3px;height:312px;background:#3a3a3a;"></div>
<div class="a" style="left:1087px;top:0px;width:1.3px;height:312px;background:#3a3a3a;"></div>
<div class="a" style="left:1435px;top:0px;width:1.3px;height:312px;background:#3a3a3a;"></div>
<div class="a" style="left:1833px;top:0px;width:1.3px;height:312px;background:#3a3a3a;"></div>
<div class="a" style="left:743px;top:310.5px;width:1091.8px;height:1.3px;background:#3a3a3a;"></div>
<div class="t f" style="top:2.88px;font-size:28.2px;left:749.00px;color:#1c1c1c;transform:scaleX(1.0077);transform-origin:0 50%;">дорослого.</div>
<div class="t f" style="top:33.38px;font-size:28.2px;left:749.00px;color:#1c1c1c;transform:scaleX(1.0389);transform-origin:0 50%;">Вміє правильно тримати</div>
<div class="t f" style="top:63.38px;font-size:28.2px;left:749.00px;color:#1c1c1c;transform:scaleX(1.0415);transform-origin:0 50%;">ножиці, вирізає крупні</div>
<div class="t f" style="top:93.18px;font-size:28.2px;left:749.00px;color:#1c1c1c;transform:scaleX(1.0138);transform-origin:0 50%;">деталі. Вміє наносити</div>
<div class="t f" style="top:123.28px;font-size:28.2px;left:749.00px;color:#1c1c1c;transform:scaleX(1.0416);transform-origin:0 50%;">клей.</div>
<div class="t f" style="top:153.68px;font-size:28.2px;left:749.00px;color:#1c1c1c;transform:scaleX(1.0424);transform-origin:0 50%;">Під час виконання</div>
<div class="t f" style="top:183.88px;font-size:28.2px;left:749.00px;color:#1c1c1c;transform:scaleX(1.0360);transform-origin:0 50%;">фізичних вправ розуміє і</div>
<div class="t f" style="top:213.88px;font-size:28.2px;left:749.00px;color:#1c1c1c;transform:scaleX(1.0216);transform-origin:0 50%;">дотримується інструкцій</div>
<div class="t f" style="top:243.68px;font-size:28.2px;left:749.00px;color:#1c1c1c;transform:scaleX(1.0391);transform-origin:0 50%;">вчителя; дотримується</div>
<div class="t f" style="top:273.38px;font-size:28.2px;left:749.00px;color:#1c1c1c;transform:scaleX(1.0433);transform-origin:0 50%;">правил гри.</div>
<div class="t f" style="top:-12.62px;font-size:28.2px;left:1174.00px;color:#1c1c1c;transform:scaleX(1.0458);transform-origin:0 50%;">працездатність</div>
<div class="t f" style="top:20.38px;font-size:28.2px;left:1174.00px;color:#1c1c1c;transform:scaleX(1.0264);transform-origin:0 50%;">Недостатній рівень</div>
<div class="a" style="left:1135.5px;top:30px;width:8.5px;height:8.5px;background:#1c1c1c;border-radius:50%;"></div>
<div class="t f" style="top:50.38px;font-size:28.2px;left:1174.00px;color:#1c1c1c;transform:scaleX(0.9871);transform-origin:0 50%;">самостійності у</div>
<div class="t f" style="top:79.98px;font-size:28.2px;left:1174.00px;color:#1c1c1c;transform:scaleX(1.0497);transform-origin:0 50%;">виконанні вказівок</div>
<div class="t f" style="top:110.08px;font-size:28.2px;left:1174.00px;color:#1c1c1c;transform:scaleX(1.0517);transform-origin:0 50%;">вчителя.</div>
<div class="t f" style="top:143.38px;font-size:28.2px;left:1174.00px;color:#1c1c1c;transform:scaleX(1.0314);transform-origin:0 50%;">Без допомоги</div>
<div class="a" style="left:1135.5px;top:153px;width:8.5px;height:8.5px;background:#1c1c1c;border-radius:50%;"></div>
<div class="t f" style="top:172.68px;font-size:28.2px;left:1174.00px;color:#1c1c1c;transform:scaleX(1.0153);transform-origin:0 50%;">дорослого не</div>
<div class="t f" style="top:202.38px;font-size:28.2px;left:1174.00px;color:#1c1c1c;transform:scaleX(1.0422);transform-origin:0 50%;">завжди розуміє</div>
<div class="t f" style="top:232.88px;font-size:28.2px;left:1174.00px;color:#1c1c1c;transform:scaleX(1.0301);transform-origin:0 50%;">суть завдання, гри.</div>
<div class="t f" style="top:346.38px;font-size:28.2px;left:744.80px;color:#111;font-weight:bold;transform:scaleX(1.1363);transform-origin:0 50%;">4. Рекомендації щодо організації освітнього процесу особи з особливими</div>
<div class="t f" style="top:379.38px;font-size:28.2px;left:744.80px;color:#111;font-weight:bold;transform:scaleX(1.1425);transform-origin:0 50%;">освітніми потребами (зазначити необхідне):</div>
<div class="t f" style="top:413.38px;font-size:28.2px;left:744.80px;color:#111;font-weight:bold;transform:scaleX(1.1162);transform-origin:0 50%;">1) рекомендований рівень підтримки:</div>
<div class="a sq" style="left:776.8px;top:374.0px;width:189.7px"></div>
<div class="a sq" style="left:974.6px;top:374.0px;width:74.3px"></div>
<div class="a sq" style="left:1056.9px;top:374.0px;width:156.9px"></div>
<div class="a sq" style="left:1221.8px;top:374.0px;width:153.3px"></div>
<div class="a sq" style="left:1383.1px;top:374.0px;width:115.2px"></div>
<div class="a sq" style="left:1615.9px;top:374.0px;width:173.9px"></div>
<div class="a sq" style="left:744.8px;top:407.0px;width:140.6px"></div>
<div class="a sq" style="left:1067.5px;top:407.0px;width:146.5px"></div>
<div class="a sq" style="left:1222.0px;top:407.0px;width:138.0px"></div>
<div class="a sq" style="left:778.9px;top:441.0px;width:235.8px"></div>
<div class="a sq" style="left:1022.6px;top:441.0px;width:92.0px"></div>
<div class="a sq" style="left:1122.4px;top:441.0px;width:151.9px"></div>
<div class="t f" style="top:448.38px;font-size:28.2px;left:747.00px;color:#1c1c1c;transform:scaleX(1.1397);transform-origin:0 50%;">|__|</div>
<div class="t f" style="top:448.38px;font-size:28.2px;left:803.00px;color:#1c1c1c;transform:scaleX(1.0419);transform-origin:0 50%;">перший рівень підтримки;</div>
<div class="a sq" style="left:907.8px;top:476.0px;width:78.7px"></div>
<div class="a sq" style="left:993.9px;top:476.0px;width:131.0px"></div>
<div class="t f" style="top:483.78px;font-size:28.2px;left:747.00px;color:#1c1c1c;transform:scaleX(1.1397);transform-origin:0 50%;">|__|</div>
<div class="t f" style="top:483.78px;font-size:28.2px;left:803.00px;color:#1c1c1c;transform:scaleX(1.0356);transform-origin:0 50%;">другий рівень підтримки;</div>
<div class="a sq" style="left:803.0px;top:511.4px;width:86.9px"></div>
<div class="a sq" style="left:897.2px;top:511.4px;width:78.2px"></div>
<div class="a sq" style="left:982.7px;top:511.4px;width:130.2px"></div>
<div class="t f" style="top:518.08px;font-size:28.2px;left:747.00px;color:#1c1c1c;transform:scaleX(1.1397);transform-origin:0 50%;">|__|</div>
<div class="t f" style="top:518.08px;font-size:28.2px;left:803.00px;color:#1c1c1c;transform:scaleX(1.0337);transform-origin:0 50%;">третій рівень підтримки;</div>
<div class="a sq" style="left:803.0px;top:545.7px;width:77.0px"></div>
<div class="a sq" style="left:887.3px;top:545.7px;width:78.1px"></div>
<div class="a sq" style="left:972.7px;top:545.7px;width:130.0px"></div>
<div class="t f" style="top:552.38px;font-size:28.2px;left:747.00px;color:#1c1c1c;transform:scaleX(1.1397);transform-origin:0 50%;">|__|</div>
<div class="t f" style="top:552.38px;font-size:28.2px;left:803.00px;color:#1c1c1c;transform:scaleX(1.0400);transform-origin:0 50%;">четвертий рівень підтримки;</div>
<div class="a sq" style="left:803.0px;top:580.0px;width:125.7px"></div>
<div class="a sq" style="left:936.0px;top:580.0px;width:78.5px"></div>
<div class="a sq" style="left:1021.9px;top:580.0px;width:130.7px"></div>
<div class="t f" style="top:586.78px;font-size:28.2px;left:747.00px;color:#1c1c1c;transform:scaleX(1.1397);transform-origin:0 50%;">|__|</div>
<div class="t f" style="top:586.78px;font-size:28.2px;left:803.00px;color:#1c1c1c;transform:scaleX(1.0294);transform-origin:0 50%;">п’ятий рівень підтримки;</div>
<div class="a sq" style="left:803.0px;top:614.4px;width:82.3px"></div>
<div class="a sq" style="left:892.5px;top:614.4px;width:77.7px"></div>
<div class="a sq" style="left:977.5px;top:614.4px;width:129.4px"></div>
<div class="t f" style="top:655.38px;font-size:28.2px;left:744.80px;color:#111;font-weight:bold;transform:scaleX(1.1231);transform-origin:0 50%;">2) адаптація та модифікація освітнього середовища:</div>
<div class="a sq" style="left:779.1px;top:683.0px;width:141.4px"></div>
<div class="a sq" style="left:968.1px;top:683.0px;width:178.8px"></div>
<div class="a sq" style="left:1154.8px;top:683.0px;width:151.6px"></div>
<div class="a sq" style="left:1314.3px;top:683.0px;width:168.7px"></div>
<div class="a" style="left:745.5px;top:766.5px;width:608px;height:47px;background:#f3cdb2;"></div>
<div class="a" style="left:744px;top:718px;width:1.3px;height:205px;background:#3a3a3a;"></div>
<div class="a" style="left:1354px;top:718px;width:1.3px;height:205px;background:#3a3a3a;"></div>
<div class="a" style="left:1520px;top:718px;width:1.3px;height:205px;background:#3a3a3a;"></div>
<div class="a" style="left:1834px;top:718px;width:1.3px;height:205px;background:#3a3a3a;"></div>
<div class="a" style="left:744px;top:718px;width:1091.8px;height:1.3px;background:#3a3a3a;"></div>
<div class="a" style="left:744px;top:766px;width:1091.8px;height:1.3px;background:#3a3a3a;"></div>
<div class="a" style="left:744px;top:813.5px;width:1091.8px;height:1.3px;background:#3a3a3a;"></div>
<div class="a" style="left:744px;top:922px;width:1091.8px;height:1.3px;background:#3a3a3a;"></div>
<div class="t f" style="top:730.88px;font-size:28.2px;left:866.00px;color:#1c1c1c;transform:scaleX(1.0578);transform-origin:0 50%;">Назва адаптації/модифікації</div>
<div class="a sq" style="left:946.9px;top:758.5px;width:116.4px"></div>
<div class="a sq" style="left:1071.6px;top:758.5px;width:151.4px"></div>
<div class="t f" style="top:730.88px;font-size:28.2px;left:1393.00px;color:#1c1c1c;transform:scaleX(1.0887);transform-origin:0 50%;">Так/ні</div>
<div class="a sq" style="left:1448.0px;top:758.5px;width:25.0px"></div>
<div class="t f" style="top:730.88px;font-size:28.2px;left:1615.00px;color:#1c1c1c;transform:scaleX(1.0475);transform-origin:0 50%;">Примітка</div>
<div class="a sq" style="left:1615.0px;top:758.5px;width:118.7px"></div>
<div class="t f" style="top:777.38px;font-size:28.2px;left:749.00px;color:#1c1c1c;transform:scaleX(1.0289);transform-origin:0 50%;">Пристосування середовища:</div>
<div class="a sq" style="left:749.0px;top:805.0px;width:188.9px"></div>
<div class="a sq" style="left:945.2px;top:805.0px;width:146.8px"></div>
<div class="t f" style="top:825.88px;font-size:28.2px;left:749.00px;color:#1c1c1c;transform:scaleX(1.0219);transform-origin:0 50%;">потреба в усамітненні, його періодичність та</div>
<div class="a sq" style="left:874.0px;top:853.5px;width:146.2px"></div>
<div class="a sq" style="left:1034.6px;top:853.5px;width:55.3px"></div>
<div class="a sq" style="left:1097.1px;top:853.5px;width:170.7px"></div>
<div class="t f" style="top:855.98px;font-size:28.2px;left:749.00px;color:#1c1c1c;transform:scaleX(1.0286);transform-origin:0 50%;">місце (ресурсна кімната, медіатека тощо)</div>
<div class="a sq" style="left:749.0px;top:883.5px;width:67.7px"></div>
<div class="a sq" style="left:833.6px;top:883.5px;width:110.8px"></div>
<div class="a sq" style="left:951.6px;top:883.5px;width:94.0px"></div>
<div class="a sq" style="left:1060.2px;top:883.5px;width:117.8px"></div>
<div class="a sq" style="left:1185.2px;top:883.5px;width:63.6px"></div>
<div class="t f" style="top:825.88px;font-size:28.2px;left:1360.00px;color:#1c1c1c;transform:scaleX(1.0289);transform-origin:0 50%;">так</div>
<div class="t f" style="top:825.88px;font-size:28.2px;left:1529.00px;color:#1c1c1c;transform:scaleX(1.0116);transform-origin:0 50%;">Іноді, в ресурсній</div>
<div class="t f" style="top:855.98px;font-size:28.2px;left:1529.00px;color:#1c1c1c;transform:scaleX(1.0218);transform-origin:0 50%;">кімнаті, під час</div>
<div class="t f" style="top:885.68px;font-size:28.2px;left:1529.00px;color:#1c1c1c;transform:scaleX(1.0453);transform-origin:0 50%;">читання</div>
<div class="a" style="left:1105px;top:439px;width:1.5px;height:22px;background:#444;"></div>
</div>
<svg class="a" style="left:786.0px;top:492.0px;" width="18" height="40" viewBox="0 0 18 40"><path d="M2 2.500 H16 L9 17Z" fill="#fdfdfd" stroke="#8a8a8a" stroke-width="1.300"/><path d="M9 18 L16 28 H2Z" fill="#fdfdfd" stroke="#8a8a8a" stroke-width="1.300"/><rect x="2" y="28.500" width="14" height="9.500" fill="#fdfdfd" stroke="#8a8a8a" stroke-width="1.300"/></svg>
<svg class="a" style="left:1879.5px;top:503.0px;" width="18" height="17" viewBox="0 0 18 17"><path d="M9 1 L16 10 V15 H2 V10Z" fill="#fdfdfd" stroke="#8a8a8a" stroke-width="1.300"/></svg>
<div class="a" style="left:52.0px;top:1588.3px;width:2540px;height:35.7px;background:#35579a;"></div>
<div class="a" style="left:2199.0px;top:1588.3px;width:52px;height:35.7px;background:#2b4a85;"></div>
<svg class="a" style="left:2158.0px;top:1596.0px;" width="26" height="20" viewBox="0 0 26 20"><path d="M1 2 Q7 0 12.500 3 Q18 0 25 2 V17 Q18 15 12.500 18 Q7 15 1 17Z" fill="none" stroke="#e8edf6" stroke-width="1.800"/><path d="M12.500 3 V18" stroke="#e8edf6" stroke-width="1.500"/><path d="M4 6h6M4 9.500h6M4 13h6M15 6h6M15 9.500h6M15 13h6" stroke="#e8edf6" stroke-width="1.100"/></svg>
<svg class="a" style="left:2214.0px;top:1596.0px;" width="22" height="20" viewBox="0 0 22 20"><rect x="1" y="1" width="20" height="18" fill="none" stroke="#e8edf6" stroke-width="1.800"/><path d="M4 5h14M4 8.500h14M4 12h14M4 15.500h14" stroke="#e8edf6" stroke-width="1.200"/></svg>
<svg class="a" style="left:2267.0px;top:1596.0px;" width="24" height="20" viewBox="0 0 24 20"><rect x="1" y="1" width="16" height="16" fill="none" stroke="#e8edf6" stroke-width="1.800"/><path d="M4 5h10M4 8.500h10M4 12h6" stroke="#e8edf6" stroke-width="1.200"/><circle cx="17.500" cy="14" r="5" fill="#34569a" stroke="#e8edf6" stroke-width="1.600"/><path d="M14 16 L21 12" stroke="#e8edf6" stroke-width="1.200"/></svg>
<div class="a" style="left:2314.0px;top:1605.0px;width:13px;height:3px;background:#e8edf6;"></div>
<div class="a" style="left:2332.0px;top:1606.0px;width:168px;height:1.5px;background:#c5d0e6;"></div>
<div class="a" style="left:2411.0px;top:1596.0px;width:5px;height:21px;background:#e8edf6;"></div>
<div class="a" style="left:2502.0px;top:1605.0px;width:15px;height:3px;background:#e8edf6;"></div>
<div class="a" style="left:2508.0px;top:1599.0px;width:3px;height:15px;background:#e8edf6;"></div>
<div class="t" style="top:1597.69px;font-size:17.5px;left:2538.50px;color:#e8edf6;transform:scaleX(0.9047);transform-origin:0 50%;">100%</div>
</div>
<div class="a" style="left:2636.0px;top:152.2px;width:446px;height:298.7px;background:#759ef0;border-radius:16px;"></div>
<svg class="a" style="left:2644px;top:160.2px;border-radius:9px" width="430" height="282.7" viewBox="8 8 430 283" preserveAspectRatio="none"><defs><filter id="b11" x="-20%" y="-20%" width="140%" height="140%"><feGaussianBlur stdDeviation="1.300"/></filter><filter id="b13" x="-20%" y="-20%" width="140%" height="140%"><feGaussianBlur stdDeviation="3"/></filter><filter id="b16" x="-30%" y="-30%" width="160%" height="160%"><feGaussianBlur stdDeviation="6"/></filter><filter id="b112" x="-40%" y="-40%" width="180%" height="180%"><feGaussianBlur stdDeviation="12"/></filter></defs><rect width="446" height="299" fill="#27332f"/>
<g filter="url(#b16)">
<rect x="300" y="0" width="115" height="72" fill="#131718"/>
<rect x="408" y="0" width="45" height="92" fill="#c2c2aa"/>
<rect x="372" y="78" width="80" height="82" fill="#96958a"/>
<rect x="380" y="150" width="70" height="40" fill="#27393a"/>
<rect x="340" y="252" width="110" height="50" fill="#22383a"/>
<rect x="18" y="176" width="130" height="125" fill="#2e3034"/>
<rect x="66" y="0" width="60" height="170" fill="#222c29"/>
</g>
<g filter="url(#b11)">
<rect x="8" y="9" width="58" height="46" fill="#bdbdb2"/>
<rect x="8" y="58" width="55" height="65" fill="#bcb0a0"/>
<rect x="126" y="15" width="60" height="63" fill="#c6c2b6"/>
<rect x="124" y="81" width="40" height="61" fill="#bfb6a6"/>
<g stroke="#7d86a6" stroke-width="3.500" opacity=".75">
<path d="M12 22h40M12 30h44M12 38h36M14 72h42M12 96h44M12 104h42M12 112h36M138 40h36M138 50h36M138 60h32M134 100h22M134 112h22M134 124h20"/></g>
<g stroke="#c79a5e" stroke-width="4" opacity=".7"><path d="M14 14h30M20 64h36M136 24h30M130 88h24"/></g>
</g>
<g filter="url(#b13)">
<path d="M40 299 L70 272 L120 248 L172 232 L200 226 L250 262 L330 292 L446 270 L446 299Z" fill="#dad7db"/>
<path d="M330 292 L446 262 L446 299 L330 299Z" fill="#c6c6ca"/>
<path d="M200 12 Q265 -2 330 12 Q372 40 384 110 Q392 150 380 185 L340 200 L190 240 Q160 245 150 215 Q140 170 158 105 Q170 40 200 12Z" fill="#a69b8d"/>
<path d="M205 20 Q265 5 325 20 Q350 50 350 80 Q270 60 195 100 Q190 50 205 20Z" fill="#bdb3a8"/>
<path d="M172 232 Q170 255 186 292 L262 296 L250 262Z" fill="#e4e1e4"/>
<path d="M196 100 Q260 78 330 96 Q346 140 338 200 Q330 250 296 280 Q260 296 226 278 Q190 245 184 200 Q180 140 196 100Z" fill="#dab3a2"/>
<path d="M184 160 Q186 230 226 278 Q200 270 186 240 Q172 200 184 160Z" fill="#bd978a"/>
<path d="M322 200 Q326 168 360 160 Q400 150 425 165 L446 190 L446 258 L380 262 Q340 262 328 240Z" fill="#cfa696"/>
<path d="M330 205 Q350 185 380 190 L420 200 L446 215 L446 190 L425 165 Q400 150 360 160 Q326 168 322 200Z" fill="#dab2a1"/>
</g>
<g filter="url(#b11)">
<path d="M362 214 L382 218 L380 228 L360 224Z" fill="#4b3a38"/>
<path d="M345 236 Q380 250 420 238" stroke="#9a7468" stroke-width="4" fill="none"/>
<path d="M178 143 Q215 132 256 146 Q296 130 338 134" stroke="#5d5954" stroke-width="4" fill="none" opacity=".8"/>
<path d="M188 147 Q192 170 220 170 Q248 168 252 148" stroke="#6a6560" stroke-width="3" fill="none" opacity=".7"/>
<path d="M266 146 Q272 166 300 164 Q328 160 334 138" stroke="#6a6560" stroke-width="3" fill="none" opacity=".7"/>
<ellipse cx="213" cy="152" rx="17" ry="6" fill="#5b6067" opacity=".75"/>
<ellipse cx="294" cy="146" rx="18" ry="6" fill="#5b6067" opacity=".75"/>
<path d="M252 160 Q246 196 250 204 Q262 210 276 202" stroke="#a57c6e" stroke-width="5" fill="none"/>
<path d="M230 222 Q258 214 288 222 Q280 240 258 240 Q238 238 230 222Z" fill="#8a5755"/>
<path d="M240 224 Q258 220 278 224 L274 229 Q258 226 244 229Z" fill="#d8c4bc"/>
<path d="M200 125 Q220 118 240 124 M276 120 Q300 112 322 118" stroke="#94826f" stroke-width="4" fill="none" opacity=".8"/>
</g></svg>
<div class="a" style="left:3006.0px;top:176.2px;width:52px;height:52px;background:#366cd6;border-radius:50%;"></div>
<div class="a" style="left:3027.8px;top:189.7px;width:8.4px;height:25px;background:#fff;border-radius:4.2px;"></div>
<div class="a" style="left:3015.8px;top:196.2px;width:8px;height:12px;background:#fff;border-radius:4px;"></div>
<div class="a" style="left:3040.2px;top:196.2px;width:8px;height:12px;background:#fff;border-radius:4px;"></div>
<div class="t" style="top:395.90px;font-size:28px;left:2668.50px;color:#ffffff;transform:scaleX(1.0625);transform-origin:0 50%;text-shadow:0 1px 3px rgba(0,0,0,.7),0 0 6px rgba(0,0,0,.35);-webkit-text-stroke:.350px #fff;">Олена Овсейчук</div>
<svg class="a" style="left:3106px;top:152.2px;border-radius:16px" width="446" height="298.7" viewBox="0 0 446 299" preserveAspectRatio="none"><defs><filter id="b21" x="-20%" y="-20%" width="140%" height="140%"><feGaussianBlur stdDeviation="1.300"/></filter><filter id="b23" x="-20%" y="-20%" width="140%" height="140%"><feGaussianBlur stdDeviation="3"/></filter><filter id="b26" x="-30%" y="-30%" width="160%" height="160%"><feGaussianBlur stdDeviation="6"/></filter><filter id="b212" x="-40%" y="-40%" width="180%" height="180%"><feGaussianBlur stdDeviation="12"/></filter></defs><rect width="446" height="299" fill="#b5b1aa"/>
<g filter="url(#b212)">
<rect x="-20" y="-20" width="500" height="60" fill="#a2a39f"/>
<rect x="-20" y="-10" width="140" height="170" fill="#9b9a96"/>
<rect x="230" y="70" width="170" height="150" fill="#c2bdb5"/>
<rect x="-20" y="150" width="110" height="80" fill="#aaa6a0"/>
</g>
<g filter="url(#b21)">
<rect x="396" y="-5" width="30" height="310" fill="#4a4955"/>
<rect x="386" y="-5" width="12" height="310" fill="#6c6a70" opacity=".6"/>
<rect x="425" y="-5" width="30" height="310" fill="#c3ccd5"/>
<rect x="270" y="23" width="88" height="38" rx="3" fill="#e9e9e9"/>
<rect x="270" y="52" width="88" height="9" fill="#c6c7c7"/>
<rect x="358" y="58" width="30" height="3" fill="#8a8a88"/>
</g>
<g filter="url(#b23)">
<path d="M0 222 L30 215 L62 232 L70 299 L0 299Z" fill="#7f8281"/>
<path d="M12 202 L48 196 L52 232 L18 238Z" fill="#b3a47c"/>
<path d="M0 232 L40 238 L40 252 L0 250Z" fill="#5d6a4e"/>
<path d="M398 240 Q420 220 446 232 L446 299 L392 299Z" fill="#8f908e"/>
<ellipse cx="366" cy="218" rx="17" ry="26" fill="#d4cf9e"/>
</g>
<g filter="url(#b23)">
<path d="M36 299 L92 232 L126 192 L162 172 L236 176 L270 166 L334 186 L380 238 L410 299Z" fill="#6c2222"/>
<path d="M92 232 L126 192 L162 172 L190 176 L150 299 L36 299Z" fill="#5e1c1c"/>
<path d="M158 174 L192 226 L250 170 Q205 190 158 174Z" fill="#c0958a"/>
<ellipse cx="196" cy="84" rx="58" ry="54" fill="#382b28"/>
<ellipse cx="198" cy="46" rx="32" ry="22" fill="#382b28"/>
<path d="M244 110 Q262 150 248 176 L236 160Z" fill="#382b28"/>
<ellipse cx="193" cy="152" rx="53" ry="63" fill="#c79c8f"/>
<path d="M140 118 Q160 84 200 86 Q236 86 248 120 Q225 100 196 102 Q160 104 140 118Z" fill="#382b28"/>
</g>
<g fill="none" stroke="#4b4149" stroke-width="3.500" opacity=".85" filter="url(#b21)">
<path d="M138 134 L186 138 Q186 166 166 168 Q146 168 140 148Z"/><path d="M196 136 L244 126 Q246 154 226 160 Q204 164 196 136Z"/><path d="M186 142 L196 140"/></g>
<g filter="url(#b21)">
<path d="M150 146 Q162 152 176 148 M206 142 Q220 146 234 138" stroke="#5e4a48" stroke-width="3" fill="none"/>
<path d="M176 190 Q194 196 212 188" stroke="#96655f" stroke-width="3.500" fill="none"/>
<path d="M186 168 Q184 178 194 178" stroke="#a87c70" stroke-width="3" fill="none"/>
<circle cx="118" cy="232" r="3.500" fill="#3a1414"/><circle cx="360" cy="240" r="3.500" fill="#3a1414"/><circle cx="238" cy="222" r="3" fill="#5a1a1a"/>
</g></svg>
<div class="a" style="left:3476px;top:176.2px;width:52px;height:52px;border-radius:50%;background:rgba(32,33,36,.72)"></div>
<svg class="a" style="left:3486px;top:186.7px" width="32" height="32" viewBox="0 0 24 24"><path fill="#fff" d="M19 11h-1.7c0 .74-.16 1.43-.43 2.05l1.23 1.23c.56-.98.9-2.090.9-3.280zm-4.020.170c0-.060.020-.110.020-.170V5c0-1.660-1.340-3-3-3S9 3.340 9 5v.180l5.980 5.990zM4.270 3L3 4.270l6.010 6.010V11c0 1.660 1.330 3 2.990 3 .220 0 .440-.030.650-.080l1.660 1.660c-.710.330-1.500.520-2.310.520-2.760 0-5.300-2.100-5.300-5.100H5c0 3.410 2.720 6.230 6 6.720V21h2v-3.280c.910-.130 1.770-.450 2.540-.900L19.730 21 21 19.730 4.270 3z"/></svg>
<div class="t" style="top:395.90px;font-size:28px;left:3138.50px;color:#ffffff;transform:scaleX(1.0347);transform-origin:0 50%;text-shadow:0 1px 3px rgba(0,0,0,.7),0 0 6px rgba(0,0,0,.35);-webkit-text-stroke:.350px #fff;">Вероніка В`ячеславівна О...</div>
<div class="a" style="left:2636.0px;top:475.4px;width:446px;height:298.7px;background:#3c4043;border-radius:16px;"></div>
<svg class="a" style="left:2766px;top:475.4px;border-radius:0" width="185" height="298.7" viewBox="0 0 185 299" preserveAspectRatio="none"><defs><filter id="b31" x="-20%" y="-20%" width="140%" height="140%"><feGaussianBlur stdDeviation="1.300"/></filter><filter id="b33" x="-20%" y="-20%" width="140%" height="140%"><feGaussianBlur stdDeviation="3"/></filter><filter id="b36" x="-30%" y="-30%" width="160%" height="160%"><feGaussianBlur stdDeviation="6"/></filter><filter id="b312" x="-40%" y="-40%" width="180%" height="180%"><feGaussianBlur stdDeviation="12"/></filter></defs><rect width="185" height="299" fill="#d2d5d9"/>
<g filter="url(#b36)">
<rect x="-10" y="-10" width="210" height="60" fill="#c3c9d1"/>
<rect x="-5" y="55" width="60" height="90" fill="#dfe1e3"/>
<rect x="100" y="50" width="90" height="60" fill="#dcdfe2"/>
<rect x="128" y="120" width="70" height="75" fill="#b1b1b1"/>
<rect x="120" y="110" width="70" height="10" fill="#d8d8d8"/>
</g>
<g filter="url(#b31)">
<path d="M0 44 L38 62" stroke="#50505a" stroke-width="4"/>
<path d="M0 58 L30 70" stroke="#8a8c92" stroke-width="3"/>
<path d="M100 44 L185 26" stroke="#3c4252" stroke-width="3.500"/>
<ellipse cx="148" cy="31" rx="9" ry="6" fill="#3a4a7a"/>
<path d="M118 44 L120 54 M146 36 L148 50" stroke="#3c4252" stroke-width="2.500"/>
</g>
<g filter="url(#b33)">
<path d="M-30 202 L44 196 L86 262 L136 182 L215 190 L215 330 L-30 330Z" fill="#14141e"/>
<path d="M40 150 L132 150 L136 184 L86 260 L44 198Z" fill="#c59c8b"/>
<ellipse cx="80" cy="100" rx="46" ry="50" fill="#b09a7e"/>
<path d="M34 130 Q30 70 78 56 Q126 66 124 130 L120 170 Q110 210 80 214 Q52 212 42 176Z" fill="#d7b1a1"/>
<path d="M40 84 Q60 56 84 56 Q112 60 122 90 Q100 70 78 72 Q56 74 40 84Z" fill="#b8a282"/>
<path d="M-30 160 Q24 130 44 142 L52 196 L30 200 L-30 196Z" fill="#d2aa99"/>
<path d="M30 160 Q40 175 34 198" stroke="#b58e7e" stroke-width="4" fill="none"/>
</g>
<g fill="none" stroke="#3a2626" stroke-width="4" opacity=".92" filter="url(#b31)">
<path d="M26 116 L76 110 Q78 142 58 148 Q34 150 26 116Z"/><path d="M84 106 L126 100 Q128 130 112 138 Q90 142 84 106Z"/><path d="M76 118 L84 116"/></g>
<g filter="url(#b31)">
<path d="M40 128 Q52 134 64 128 M94 120 Q106 124 116 116" stroke="#5e4a48" stroke-width="3" fill="none"/>
<path d="M66 178 Q86 170 104 176" stroke="#9c6664" stroke-width="4" fill="none"/>
<path d="M80 140 Q76 156 88 158" stroke="#b48878" stroke-width="3" fill="none"/>
</g></svg>
<div class="a" style="left:3006px;top:499.4px;width:52px;height:52px;border-radius:50%;background:rgba(32,33,36,.72)"></div>
<svg class="a" style="left:3016px;top:509.9px" width="32" height="32" viewBox="0 0 24 24"><path fill="#fff" d="M19 11h-1.7c0 .74-.16 1.43-.43 2.05l1.23 1.23c.56-.98.9-2.090.9-3.280zm-4.020.170c0-.060.020-.110.020-.170V5c0-1.660-1.340-3-3-3S9 3.340 9 5v.180l5.980 5.990zM4.270 3L3 4.270l6.010 6.010V11c0 1.660 1.330 3 2.990 3 .220 0 .440-.030.650-.080l1.660 1.660c-.710.330-1.500.520-2.310.520-2.760 0-5.300-2.100-5.300-5.100H5c0 3.410 2.720 6.230 6 6.720V21h2v-3.280c.910-.130 1.770-.450 2.540-.900L19.730 21 21 19.730 4.270 3z"/></svg>
<div class="t" style="top:719.10px;font-size:28px;left:2668.50px;color:#ffffff;transform:scaleX(1.0433);transform-origin:0 50%;text-shadow:0 1px 3px rgba(0,0,0,.7),0 0 6px rgba(0,0,0,.35);-webkit-text-stroke:.350px #fff;">Валентина Вікторівна Ден...</div>
<svg class="a" style="left:3106px;top:475.4px;border-radius:16px" width="446" height="298.7" viewBox="0 0 446 299" preserveAspectRatio="none"><defs><filter id="b41" x="-20%" y="-20%" width="140%" height="140%"><feGaussianBlur stdDeviation="1.300"/></filter><filter id="b43" x="-20%" y="-20%" width="140%" height="140%"><feGaussianBlur stdDeviation="3"/></filter><filter id="b46" x="-30%" y="-30%" width="160%" height="160%"><feGaussianBlur stdDeviation="6"/></filter><filter id="b412" x="-40%" y="-40%" width="180%" height="180%"><feGaussianBlur stdDeviation="12"/></filter></defs><rect width="446" height="299" fill="#a3a29c"/>
<g filter="url(#b412)">
<rect x="-30" y="-30" width="110" height="360" fill="#75818a"/>
<rect x="-30" y="-30" width="520" height="55" fill="#8b8e8d"/>
<rect x="120" y="40" width="230" height="150" fill="#b0aea6"/>
<rect x="-20" y="235" width="110" height="90" fill="#5e6567"/>
<rect x="330" y="-20" width="130" height="120" fill="#9a9890"/>
<path d="M370 128 L470 112 L470 320 L384 320Z" fill="#2a1812"/>
<rect x="384" y="122" width="80" height="70" fill="#54161b"/>
</g>
<g filter="url(#b43)">
<path d="M238 84 Q176 84 164 170 L152 240 L138 299 L330 299 L318 200 Q308 92 238 84Z" fill="#3c3029"/>
<path d="M284 262 L372 284 L392 299 L270 299Z" fill="#28241e"/>
<path d="M88 299 L100 266 L148 250 L158 299Z" fill="#c4cdd5"/>
<path d="M188 150 Q190 108 238 106 Q286 108 290 160 L288 214 Q270 262 236 264 Q200 260 186 214Z" fill="#c0a091"/>
<path d="M237 86 Q206 100 190 150 Q204 116 237 108 Q272 114 290 160 Q278 100 237 86Z" fill="#3c3029"/>
<path d="M220 244 Q258 224 294 246 L288 299 L216 299Z" fill="#d0d7df"/>
<path d="M252 214 Q270 196 292 206 L296 250 Q270 232 254 244Z" fill="#c5a393"/>
</g>
<g fill="none" stroke="#383232" stroke-width="3" opacity=".85" filter="url(#b41)">
<path d="M168 166 L178 158 L292 160"/><path d="M180 160 Q184 188 204 188 Q226 186 230 162"/><path d="M244 162 Q248 186 268 186 Q288 184 292 160"/></g>
<g filter="url(#b41)">
<path d="M192 174 Q206 178 220 172 M250 172 Q264 176 280 170" stroke="#6a5a58" stroke-width="3" fill="none"/>
<path d="M232 180 Q226 204 238 208" stroke="#a48474" stroke-width="3.500" fill="none"/>
<path d="M214 232 Q232 236 250 230" stroke="#8e6a62" stroke-width="3.500" fill="none"/>
</g></svg>
<div class="a" style="left:3476px;top:499.4px;width:52px;height:52px;border-radius:50%;background:rgba(32,33,36,.72)"></div>
<svg class="a" style="left:3486px;top:509.9px" width="32" height="32" viewBox="0 0 24 24"><path fill="#fff" d="M19 11h-1.7c0 .74-.16 1.43-.43 2.05l1.23 1.23c.56-.98.9-2.090.9-3.280zm-4.020.170c0-.060.020-.110.020-.170V5c0-1.660-1.340-3-3-3S9 3.340 9 5v.180l5.980 5.990zM4.270 3L3 4.270l6.010 6.010V11c0 1.660 1.330 3 2.990 3 .220 0 .440-.030.650-.080l1.660 1.660c-.710.330-1.500.520-2.310.520-2.760 0-5.300-2.100-5.300-5.100H5c0 3.410 2.720 6.230 6 6.720V21h2v-3.280c.910-.130 1.770-.450 2.540-.900L19.730 21 21 19.730 4.270 3z"/></svg>
<div class="t" style="top:719.10px;font-size:28px;left:3138.50px;color:#ffffff;letter-spacing:0.355px;text-shadow:0 1px 3px rgba(0,0,0,.7),0 0 6px rgba(0,0,0,.35);-webkit-text-stroke:.350px #fff;">Даша</div>
<svg class="a" style="left:2636px;top:797.8px;border-radius:16px" width="446" height="298.7" viewBox="0 0 446 299" preserveAspectRatio="none"><defs><filter id="b51" x="-20%" y="-20%" width="140%" height="140%"><feGaussianBlur stdDeviation="1.300"/></filter><filter id="b53" x="-20%" y="-20%" width="140%" height="140%"><feGaussianBlur stdDeviation="3"/></filter><filter id="b56" x="-30%" y="-30%" width="160%" height="160%"><feGaussianBlur stdDeviation="6"/></filter><filter id="b512" x="-40%" y="-40%" width="180%" height="180%"><feGaussianBlur stdDeviation="12"/></filter></defs><rect width="446" height="299" fill="#81432c"/>
<g filter="url(#b512)">
<rect x="-30" y="-30" width="520" height="62" fill="#6a351f"/>
<rect x="340" y="-30" width="140" height="200" fill="#6f3722"/>
<rect x="-10" y="110" width="170" height="130" fill="#8c4c37"/>
<rect x="300" y="150" width="150" height="100" fill="#85452f"/>
</g>
<g filter="url(#b51)">
<rect x="-5" y="258" width="100" height="13" fill="#d9d4d0"/>
<rect x="386" y="268" width="70" height="13" fill="#d5d0cb"/>
</g>
<g filter="url(#b53)">
<path d="M70 299 L106 266 L168 222 L204 206 L240 250 L298 206 L338 222 L388 266 L404 299Z" fill="#dcd8d0"/>
<path d="M204 206 L240 250 L298 206 Q250 226 204 206Z" fill="#cdb0a0"/>
<path d="M168 222 L204 206 L232 246 L210 299 L150 299Z" fill="#e6e3dc"/>
<ellipse cx="238" cy="84" rx="68" ry="58" fill="#3a3128"/>
<ellipse cx="240" cy="46" rx="46" ry="20" fill="#3a3128"/>
<path d="M310 196 Q322 180 312 150 L300 190Z" fill="#4a3a2c"/>
<path d="M172 130 Q172 62 240 54 Q306 62 310 130 L304 190 Q280 246 240 250 Q198 244 178 190Z" fill="#d7b7a7"/>
<path d="M178 110 Q196 58 240 52 Q222 74 212 100Z M240 52 Q284 58 304 110 Q274 76 240 52Z" fill="#41372e" opacity=".85"/>
<ellipse cx="240" cy="108" rx="40" ry="24" fill="#e0c6b6"/>
</g>
<g filter="url(#b51)" fill="none" stroke="#70524a" stroke-width="3.500" opacity=".85">
<path d="M188 150 Q208 162 228 152"/><path d="M256 152 Q276 162 296 150"/>
<path d="M236 170 Q230 196 244 200" stroke="#b08a7a"/>
<path d="M216 220 Q240 228 266 218" stroke="#a4665e"/></g></svg>
<div class="a" style="left:3006px;top:821.8px;width:52px;height:52px;border-radius:50%;background:rgba(32,33,36,.72)"></div>
<svg class="a" style="left:3016px;top:832.3px" width="32" height="32" viewBox="0 0 24 24"><path fill="#fff" d="M19 11h-1.7c0 .74-.16 1.43-.43 2.05l1.23 1.23c.56-.98.9-2.090.9-3.280zm-4.020.170c0-.060.020-.110.020-.170V5c0-1.660-1.340-3-3-3S9 3.340 9 5v.180l5.980 5.990zM4.270 3L3 4.270l6.010 6.010V11c0 1.660 1.330 3 2.990 3 .220 0 .440-.030.650-.080l1.660 1.660c-.710.330-1.500.520-2.310.520-2.760 0-5.300-2.100-5.300-5.100H5c0 3.410 2.720 6.230 6 6.720V21h2v-3.280c.910-.130 1.770-.450 2.540-.900L19.730 21 21 19.730 4.270 3z"/></svg>
<div class="t" style="top:1041.50px;font-size:28px;left:2668.50px;color:#ffffff;transform:scaleX(1.0566);transform-origin:0 50%;text-shadow:0 1px 3px rgba(0,0,0,.7),0 0 6px rgba(0,0,0,.35);-webkit-text-stroke:.350px #fff;">Олена Сергіївна Вернигора</div>
<div class="a" style="left:3106.0px;top:797.8px;width:446px;height:298.7px;background:#3c4043;border-radius:16px;"></div>
<div class="a" style="left:3262.0px;top:879.8px;width:134px;height:134px;background:#3a877d;border-radius:50%;"></div>
<div class="t" style="top:913.74px;font-size:68px;left:3306.00px;color:#ffffff;transform:scaleX(1.0141);transform-origin:0 50%;-webkit-text-stroke:.800px #fff;">A</div>
<div class="a" style="left:3476px;top:821.8px;width:52px;height:52px;border-radius:50%;background:rgba(32,33,36,.72)"></div>
<svg class="a" style="left:3486px;top:832.3px" width="32" height="32" viewBox="0 0 24 24"><path fill="#fff" d="M19 11h-1.7c0 .74-.16 1.43-.43 2.05l1.23 1.23c.56-.98.9-2.090.9-3.280zm-4.020.170c0-.060.020-.110.020-.170V5c0-1.660-1.340-3-3-3S9 3.340 9 5v.180l5.980 5.990zM4.270 3L3 4.270l6.010 6.010V11c0 1.660 1.330 3 2.990 3 .220 0 .440-.030.650-.080l1.660 1.660c-.710.330-1.500.520-2.310.520-2.760 0-5.300-2.100-5.300-5.100H5c0 3.410 2.720 6.230 6 6.720V21h2v-3.280c.910-.130 1.770-.450 2.540-.900L19.730 21 21 19.730 4.270 3z"/></svg>
<div class="t" style="top:1041.50px;font-size:28px;left:3138.50px;color:#ffffff;letter-spacing:0.184px;text-shadow:0 1px 3px rgba(0,0,0,.7),0 0 6px rgba(0,0,0,.35);-webkit-text-stroke:.350px #fff;">Алла Вячеславівна Попла...</div>
<svg class="a" style="left:2636px;top:1119.7px;border-radius:16px" width="446" height="298.7" viewBox="0 0 446 299" preserveAspectRatio="none"><defs><filter id="b71" x="-20%" y="-20%" width="140%" height="140%"><feGaussianBlur stdDeviation="1.300"/></filter><filter id="b73" x="-20%" y="-20%" width="140%" height="140%"><feGaussianBlur stdDeviation="3"/></filter><filter id="b76" x="-30%" y="-30%" width="160%" height="160%"><feGaussianBlur stdDeviation="6"/></filter><filter id="b712" x="-40%" y="-40%" width="180%" height="180%"><feGaussianBlur stdDeviation="12"/></filter></defs><rect width="446" height="299" fill="#c4b488"/>
<g filter="url(#b76)">
<path d="M140 -10 L470 -10 L470 50 L192 76Z" fill="#c2c7c3"/>
<path d="M240 -10 L470 -10 L470 28 L300 38Z" fill="#a8afaf"/>
<path d="M95 -10 L150 -10 L196 76 L196 140 L160 78Z" fill="#ab9b73"/>
<rect x="196" y="78" width="260" height="110" fill="#cbbb8d"/>
<rect x="200" y="180" width="250" height="60" fill="#b9a97d"/>
<rect x="400" y="50" width="60" height="100" fill="#bdae84"/>
</g>
<g filter="url(#b71)">
<path d="M-5 -5 L100 -5 L160 76 L160 285 L-5 285Z" fill="#f6f7fb"/>
<path d="M40 -5 L22 285" stroke="#c6cfe0" stroke-width="9"/>
<path d="M102 48 L96 270" stroke="#d0d7e3" stroke-width="6"/>
<path d="M38 112 L98 142" stroke="#d6dce8" stroke-width="3"/>
<path d="M96 -5 L160 78 L160 285" stroke="#dde2e8" stroke-width="8" fill="none"/>
<path d="M190 68 L446 46" stroke="#e4e4dc" stroke-width="4"/>
</g>
<g filter="url(#b73)">
<rect x="-5" y="262" width="195" height="42" fill="#b1bac5"/>
<rect x="92" y="262" width="46" height="15" fill="#d4ca7a"/>
<rect x="-5" y="282" width="150" height="20" fill="#8c9eb4"/>
<ellipse cx="22" cy="238" rx="26" ry="10" fill="#c9d1dc"/>
<ellipse cx="172" cy="192" rx="30" ry="60" fill="#8b9071"/>
<ellipse cx="184" cy="146" rx="16" ry="34" fill="#86905d"/>
<ellipse cx="164" cy="216" rx="26" ry="30" fill="#a9ad9c"/>
<path d="M196 160 L222 164" stroke="#7d8a58" stroke-width="4"/>
<rect x="84" y="190" width="12" height="58" fill="#b6a8c0" opacity=".7"/>
</g>
<g filter="url(#b71)">
<rect x="287" y="158" width="84" height="62" fill="#b6c2c4"/>
<rect x="352" y="158" width="20" height="62" fill="#4b4a47"/>
<rect x="287" y="158" width="84" height="9" fill="#566880"/>
<path d="M300 176 h44 M300 188 h40 M300 200 h44" stroke="#97a8a6" stroke-width="5"/>
<path d="M326 168 L340 214" stroke="#7e9a86" stroke-width="5"/>
</g>
<g filter="url(#b73)">
<rect x="188" y="234" width="144" height="70" fill="#2c2721"/>
<rect x="196" y="226" width="36" height="30" fill="#6a5a48"/>
<ellipse cx="248" cy="240" rx="18" ry="14" fill="#1c1917"/>
<path d="M240 299 Q258 262 332 266 L332 299Z" fill="#192339"/>
<path d="M316 299 Q340 226 400 222 L450 232 L450 299Z" fill="#bebebe"/>
<path d="M372 232 Q410 226 450 240 L450 262 Q410 240 372 246Z" fill="#d4d4d4"/>
</g></svg>
<div class="a" style="left:3006px;top:1143.7px;width:52px;height:52px;border-radius:50%;background:rgba(32,33,36,.72)"></div>
<svg class="a" style="left:3016px;top:1154.2px" width="32" height="32" viewBox="0 0 24 24"><path fill="#fff" d="M19 11h-1.7c0 .74-.16 1.43-.43 2.05l1.23 1.23c.56-.98.9-2.090.9-3.280zm-4.020.170c0-.060.020-.110.020-.170V5c0-1.660-1.340-3-3-3S9 3.340 9 5v.180l5.980 5.990zM4.270 3L3 4.270l6.010 6.010V11c0 1.660 1.330 3 2.990 3 .220 0 .440-.030.650-.080l1.660 1.660c-.710.330-1.500.520-2.310.520-2.760 0-5.300-2.100-5.300-5.100H5c0 3.410 2.720 6.230 6 6.720V21h2v-3.280c.910-.130 1.770-.450 2.540-.900L19.730 21 21 19.730 4.270 3z"/></svg>
<div class="t" style="top:1363.40px;font-size:28px;left:2668.50px;color:#ffffff;letter-spacing:0.407px;text-shadow:0 1px 3px rgba(0,0,0,.7),0 0 6px rgba(0,0,0,.35);-webkit-text-stroke:.350px #fff;">Катерина Валентинівна Я...</div>
<div class="a" style="left:3106.0px;top:1119.7px;width:446px;height:298.7px;background:#3c4043;border-radius:16px;"></div>
<div class="a" style="left:3247.0px;top:1190.8px;width:89px;height:89px;background:#3a877d;border-radius:50%;"></div>
<div class="a" style="left:3325.6px;top:1187.0px;width:96px;height:96px;background:#3c4043;border-radius:50%;"></div>
<div class="a" style="left:3329.1px;top:1190.5px;width:89px;height:89px;background:#b24322;border-radius:50%;"></div>
<div class="t" style="top:1213.75px;font-size:44px;left:3276.50px;color:#ffffff;letter-spacing:-0.359px;-webkit-text-stroke:.700px #fff;">K</div>
<div class="t" style="top:1213.75px;font-size:44px;left:3367.48px;color:#ffffff;-webkit-text-stroke:.700px #fff;">I</div>
<div class="t" style="top:1316.70px;font-size:28px;left:3250.00px;color:#ffffff;transform:scaleX(1.0527);transform-origin:0 50%;-webkit-text-stroke:.400px #fff;">Ще 4 особи</div>
<div class="a" style="left:2872.0px;top:1441.7px;width:446px;height:298.7px;background:#3c4043;border-radius:16px;"></div>
<svg class="a" style="left:2872px;top:1463.0px;border-radius:0" width="446" height="253" viewBox="0 0 446 253" preserveAspectRatio="none"><defs><filter id="b91" x="-20%" y="-20%" width="140%" height="140%"><feGaussianBlur stdDeviation="1.300"/></filter><filter id="b93" x="-20%" y="-20%" width="140%" height="140%"><feGaussianBlur stdDeviation="3"/></filter><filter id="b96" x="-30%" y="-30%" width="160%" height="160%"><feGaussianBlur stdDeviation="6"/></filter><filter id="b912" x="-40%" y="-40%" width="180%" height="180%"><feGaussianBlur stdDeviation="12"/></filter></defs><rect width="446" height="253" fill="#d4d0be"/>
<g filter="url(#b912)">
<rect x="-20" y="-20" width="62" height="300" fill="#b57c3a"/>
<rect x="-20" y="180" width="58" height="100" fill="#96632c"/>
<rect x="42" y="-20" width="96" height="300" fill="#4b4637"/>
<rect x="120" y="-20" width="115" height="120" fill="#6b6652"/>
<rect x="240" y="-20" width="230" height="100" fill="#dddac8"/>
<ellipse cx="335" cy="95" rx="52" ry="26" fill="#77806a"/>
<ellipse cx="305" cy="128" rx="36" ry="22" fill="#c86b3b"/>
<ellipse cx="428" cy="122" rx="30" ry="34" fill="#1c2848"/>
<ellipse cx="378" cy="156" rx="42" ry="26" fill="#4e594c"/>
<rect x="300" y="172" width="160" height="90" fill="#d0ccc6"/>
<ellipse cx="378" cy="186" rx="14" ry="10" fill="#d9b338"/>
<rect x="350" y="200" width="60" height="30" fill="#a9b8cc"/>
</g>
<g filter="url(#b93)">
<path d="M52 253 L84 196 L140 172 L186 214 L252 168 L328 196 L380 253Z" fill="#191924"/>
<g fill="#dad7f0">
<path d="M70 253 L96 204 L118 253Z"/><path d="M112 210 L140 178 L154 222 L136 253 L122 253Z"/><path d="M262 180 L286 170 L300 214 L280 232Z"/><path d="M306 192 L326 200 L350 253 L322 253Z"/><path d="M248 253 L266 222 L290 253Z"/><path d="M190 253 L206 236 L226 253Z"/><path d="M296 236 L310 222 L318 253 L300 253Z"/>
</g>
<ellipse cx="180" cy="82" rx="72" ry="66" fill="#c2a171"/>
<ellipse cx="242" cy="118" rx="20" ry="50" fill="#b6996e"/>
<path d="M132 176 Q186 232 252 168 L246 196 Q196 244 140 200Z" fill="#121218"/>
<path d="M130 120 Q132 70 186 66 Q240 70 244 124 L238 166 Q220 214 186 218 Q150 214 134 166Z" fill="#d0a18a"/>
<path d="M108 108 Q130 40 230 52 Q250 70 244 100 Q200 74 164 100 Q140 126 120 128Z" fill="#d2b07c"/>
<path d="M150 60 Q190 50 226 70" stroke="#e4cfa0" stroke-width="7" fill="none" opacity=".7"/>
</g>
<g fill="none" stroke="#3c2430" stroke-width="3" opacity=".92" filter="url(#b91)">
<path d="M120 124 L176 126 Q176 150 156 152 Q130 152 120 124Z"/><path d="M186 126 L238 122 Q238 148 220 152 Q192 152 186 126Z"/><path d="M176 130 L186 130"/></g>
<g filter="url(#b91)">
<path d="M134 134 Q148 140 164 134 M198 134 Q212 140 228 132" stroke="#4c3a38" stroke-width="3.500" fill="none"/>
<path d="M176 146 Q168 170 182 174" stroke="#ae8270" stroke-width="3.500" fill="none"/>
<path d="M168 192 Q186 196 204 190" stroke="#96605a" stroke-width="3.500" fill="none"/>
</g></svg>
<div class="t" style="top:1684.00px;font-size:28px;left:2905.00px;color:#ffffff;transform:scaleX(1.0364);transform-origin:0 50%;text-shadow:0 1px 3px rgba(0,0,0,.7),0 0 6px rgba(0,0,0,.35);-webkit-text-stroke:.350px #fff;">Тетяна Іванівна Мієр</div>
<div class="a" style="left:0;top:0;width:10px;height:1885px;background:linear-gradient(180deg,#1d474d 0,#2b5b5e 6%,#3c6c6b 10%,#24504c 14%,#1c3a30 20%,#242d14 25%,#3d5468 28%,#4a6078 31%,#2a4058 36%,#1f4a50 42%,#4a3a28 47%,#5a4028 51%,#3a4048 56%,#1c2428 62%,#1c1c10 70%,#20200f 78%,#2f5f68 82%,#3a6068 86%,#5a4a2a 90%,#4a5a4a 93%,#3a6a78 96%,#356a78 100%)"></div>
<div class="a" style="left:10.0px;top:0.0px;width:3569px;height:7px;background:#ffffff;"></div>
<div class="a" style="left:10.0px;top:7.0px;width:3569px;height:1px;background:#cfd1d2;"></div>
<div class="a" style="left:42.0px;top:40.0px;width:72px;height:80px;background:#f4c142;border-radius:16px;"></div>
<svg class="a" style="left:50px;top:52px" width="56" height="56" viewBox="0 0 56 56"><g fill="#202124">
<path d="M11.35 10.5 L39.500 38.850 L11.350 38.850Z"/>
<path d="M18.200 9.300 L27.900 9.300 L27.900 15.900 L44.600 15.900 L44.600 35.500 L41.500 32.600 L41.500 19 L27.200 19 L24.800 16.500 L24.800 12 L21 12Z"/>
<rect x="34.900" y="22.300" width="3.100" height="3.300"/></g>
<g fill="#f4c142"><rect x="14.200" y="18.800" width="4" height="3.700"/><rect x="14.200" y="25.600" width="4" height="3.500"/><rect x="21" y="25.600" width="4" height="3.500"/><rect x="14.200" y="32" width="4" height="3.700"/><rect x="21" y="32" width="4" height="3.700"/><path d="M27.900 32 L31.400 32 L35.100 35.700 L27.900 35.700Z"/></g>
<path d="M9.900 9.300 L43 41.800" stroke="#202124" stroke-width="3" fill="none"/></svg>
<div class="a" style="left:146.0px;top:40.0px;width:3406px;height:80px;background:#3c4043;border-radius:16px;"></div>
<svg class="a" style="left:177.800px;top:55.800px;border-radius:50%" width="48.400" height="48.400" viewBox="0 0 48 48">
<defs><filter id="av1"><feGaussianBlur stdDeviation="0.800"/></filter></defs>
<rect width="48" height="48" fill="#3b4a45"/>
<g filter="url(#av1)">
<rect x="0" y="0" width="22" height="30" fill="#a8916a"/>
<rect x="8" y="8" width="12" height="6" fill="#e6e2d2"/>
<rect x="11" y="12" width="3.500" height="14" fill="#d8ba24"/>
<rect x="5" y="16" width="4" height="12" fill="#c9b9a2"/>
<rect x="14.500" y="18" width="2.500" height="12" fill="#3d9a4c"/>
<rect x="0" y="14.500" width="20" height="1.500" fill="#7a5a40"/>
<rect x="2" y="26" width="8" height="16" fill="#2b2b33"/>
<rect x="32" y="14" width="10" height="14" fill="#30343a"/>
<rect x="40" y="26" width="8" height="8" fill="#c6844a"/>
<path d="M8 42 L12 22 L18 14 L24 20 L30 20 L34 22 L42 30 L46 42Z" fill="#2a305c"/>
<path d="M14 16 Q17 12 20 14 L22 22 L14 26Z" fill="#2f3460"/>
<circle cx="25.500" cy="7.500" r="7" fill="#c5c5c5"/>
<ellipse cx="25.500" cy="11.500" rx="4.600" ry="5.600" fill="#d1aa9b"/>
<path d="M21 22 L25 26 L29 22 L28 19 L22 19Z" fill="#d1aa9b"/>
<path d="M18 30 L24 27 L24 40 L19 40Z M26 27 L32 31 L30 40 L26 40Z" fill="#d9dcea"/>
<path d="M34 30 L43 27 L44 30 L35 34Z M10 30 L17 36 L15 38 L9 33Z" fill="#e4e6f0"/>
<rect x="0" y="40.500" width="48" height="8" fill="#cfa173"/>
</g></svg>
<div class="t" style="top:64.41px;font-size:32px;left:257.00px;color:#ffffff;transform:scaleX(0.9346);transform-origin:0 50%;-webkit-text-stroke:.400px #fff;">Олена Овсейчук (Презентація)</div>
<div class="a" style="left:58.0px;top:1580.0px;width:688px;height:96px;background:#3c4043;border-radius:8px;box-shadow:0 6px 14px rgba(0,0,0,.45);"></div>
<div class="t" style="top:1613.80px;font-size:28px;left:90.00px;color:#e8eaed;transform:scaleX(1.0561);transform-origin:0 50%;-webkit-text-stroke:.250px #e8eaed;">Живі субтитри вимкнено</div>
<div class="t" style="top:1803.91px;font-size:32px;left:58.00px;color:#ffffff;transform:scaleX(1.1594);transform-origin:0 50%;-webkit-text-stroke:.500px #fff;">oxj-qwfu-cdt</div>
<div class="a" style="left:1233.0px;top:1772.0px;width:176px;height:96px;background:#28292c;border-radius:48px;"></div>
<div class="a" style="left:1313.0px;top:1772.0px;width:96px;height:96px;background:#333537;border-radius:48px;"></div>
<div class="a" style="left:1425.0px;top:1772.0px;width:176px;height:96px;background:#28292c;border-radius:48px;"></div>
<div class="a" style="left:1505.0px;top:1772.0px;width:96px;height:96px;background:#333537;border-radius:48px;"></div>
<svg class="a" style="left:1265.5px;top:1808px" width="28" height="24" viewBox="0 0 28 24"><path d="M4.5 17.3 L14 7.8 L23.5 17.3" fill="none" stroke="#8f9294" stroke-width="3"/></svg>
<svg class="a" style="left:1457.5px;top:1808px" width="28" height="24" viewBox="0 0 28 24"><path d="M4.5 17.3 L14 7.8 L23.5 17.3" fill="none" stroke="#8f9294" stroke-width="3"/></svg>
<svg class="a" style="left:1337px;top:1796px" width="48" height="48" viewBox="0 0 24 24"><path fill="#e3e3e3" d="M12 14c1.66 0 3-1.34 3-3V5c0-1.66-1.34-3-3-3S9 3.34 9 5v6c0 1.66 1.34 3 3 3z"/><path fill="#e3e3e3" d="M17 11c0 2.76-2.24 5-5 5s-5-2.24-5-5H5c0 3.53 2.61 6.43 6 6.92V21h2v-3.08c3.39-.49 6-3.39 6-6.92h-2z"/></svg>
<svg class="a" style="left:1529px;top:1796px" width="48" height="48" viewBox="0 0 48 48"><rect x="6" y="10" width="28.5" height="28" rx="3.5" fill="none" stroke="#e3e3e3" stroke-width="4"/><path d="M35 23.5 L44.5 14 L44.5 35 L35 25.5Z" fill="#e3e3e3"/></svg>
<div class="a" style="left:1617.0px;top:1772.0px;width:112px;height:96px;background:#333537;border-radius:48px;"></div>
<svg class="a" style="left:1649px;top:1796px" width="48" height="48" viewBox="0 0 24 24"><path fill="#e3e3e3" d="M19 4H5c-1.11 0-2 .9-2 2v12c0 1.1.89 2 2 2h14c1.1 0 2-.9 2-2V6c0-1.1-.9-2-2-2zm0 14H5V6h14v12z"/><path fill="#e3e3e3" d="M7 15h3c.55 0 1-.45 1-1v-1H9.500v.5h-2v-3h2v.5H11v-1c0-.55-.45-1-1-1H7c-.55 0-1 .45-1 1v4c0 .55.45 1 1 1zm7 0h3c.55 0 1-.45 1-1v-1h-1.500v.5h-2v-3h2v.5H18v-1c0-.55-.45-1-1-1h-3c-.55 0-1 .45-1 1v4c0 .55.45 1 1 1z"/></svg>
<div class="a" style="left:1745.0px;top:1772.0px;width:112px;height:96px;background:#333537;border-radius:48px;"></div>
<svg class="a" style="left:1777px;top:1796px" width="48" height="48" viewBox="0 0 24 24"><circle cx="12" cy="12" r="9" fill="none" stroke="#e3e3e3" stroke-width="2"/><circle cx="8.5" cy="9.6" r="1.5" fill="#e3e3e3"/><circle cx="15.5" cy="9.6" r="1.5" fill="#e3e3e3"/><path fill="#e3e3e3" d="M6.9 13.5h10.2c-.8 2.05-2.8 3.5-5.1 3.500s-4.300-1.450-5.100-3.500z"/></svg>
<div class="a" style="left:1873.0px;top:1772.0px;width:112px;height:96px;background:#333537;border-radius:48px;"></div>
<svg class="a" style="left:1905px;top:1796px" width="48" height="48" viewBox="0 0 24 24"><path fill="#e3e3e3" d="M21 3H3c-1.11 0-2 .89-2 2v14c0 1.110.89 2 2 2h18c1.110 0 2-.89 2-2V5c0-1.110-.89-2-2-2zm0 16.020H3V4.980h18v14.040z"/><path fill="#e3e3e3" d="M11 16h2v-4h3l-4-4-4 4h3z"/></svg>
<div class="a" style="left:2001.0px;top:1772.0px;width:112px;height:96px;background:#333537;border-radius:48px;"></div>
<svg class="a" style="left:2033px;top:1796px" width="48" height="48" viewBox="0 0 24 24"><path fill="none" stroke="#e3e3e3" stroke-width="1.9" stroke-linejoin="round" stroke-linecap="round" d="M8.2 12V4.600c0-.800.600-1.400 1.300-1.400s1.300.600 1.300 1.400V11 M10.800 10.500V2.900c0-.800.600-1.400 1.300-1.400s1.300.600 1.300 1.400v7.600 M13.400 10.500V3.700c0-.800.600-1.400 1.300-1.400s1.300.600 1.300 1.400V11 M16 11V6.300c0-.800.600-1.400 1.300-1.400s1.300.600 1.300 1.400v9.200c0 4.300-2.800 7.400-6.600 7.400-3 0-5-1.500-6.200-4.200L3.300 12.500c-.300-.800.500-1.600 1.400-1.300.900.300 1.500.900 1.900 1.700l1.600 2.600V12"/></svg>
<div class="a" style="left:2129.0px;top:1772.0px;width:72px;height:96px;background:#333537;border-radius:36px;"></div>
<div class="a" style="left:2161.0px;top:1804.0px;width:8px;height:8px;background:#e3e3e3;border-radius:50%;"></div>
<div class="a" style="left:2161.0px;top:1816.0px;width:8px;height:8px;background:#e3e3e3;border-radius:50%;"></div>
<div class="a" style="left:2161.0px;top:1828.0px;width:8px;height:8px;background:#e3e3e3;border-radius:50%;"></div>
<div class="a" style="left:2217.0px;top:1772.0px;width:144px;height:96px;background:#cd4439;border-radius:48px;"></div>
<svg class="a" style="left:2265px;top:1796px" width="48" height="48" viewBox="0 0 24 24"><path fill="none" stroke="#ffffff" stroke-width="1.9" stroke-linejoin="round" d="M12 8.600c-3.700 0-7.100 1.400-9.700 3.700-.400.400-.400 1 0 1.400l1.900 1.900c.400.400.900.400 1.300.100l2.300-1.700c.300-.200.400-.500.400-.800v-2.100c1.200-.400 2.500-.600 3.800-.600s2.600.200 3.800.600v2.100c0 .300.100.600.400.800l2.300 1.700c.400.300.900.300 1.300-.100l1.900-1.900c.400-.400.400-1 0-1.400C19.100 10 15.700 8.600 12 8.600z"/></svg>
<svg class="a" style="left:3200px;top:1796px" width="48" height="48" viewBox="0 0 24 24"><circle cx="12" cy="12" r="9" fill="none" stroke="#ffffff" stroke-width="2"/><rect x="11" y="11" width="2" height="6" fill="#ffffff"/><rect x="11" y="7" width="2" height="2" fill="#ffffff"/></svg>
<svg class="a" style="left:3293.100px;top:1793px" width="53.500" height="53.500" viewBox="0 0 24 24"><path fill="#ffffff" d="M9 13.750c-2.340 0-7 1.170-7 3.500V19h14v-1.750c0-2.330-4.660-3.500-7-3.500zM4.340 17c.84-.58 2.870-1.250 4.660-1.250s3.820.67 4.660 1.250H4.340zM9 12c1.930 0 3.500-1.570 3.500-3.500S10.930 5 9 5 5.500 6.570 5.500 8.500 7.070 12 9 12zm0-5c.83 0 1.500.67 1.500 1.500S9.830 10 9 10s-1.500-.67-1.500-1.500S8.170 7 9 7zm7.040 6.810c1.160.84 1.960 1.960 1.960 3.440V19h4v-1.750c0-2.020-3.500-3.170-5.960-3.440zM15 12c1.930 0 3.500-1.570 3.500-3.500S16.930 5 15 5c-.54 0-1.040.13-1.500.35.630.89 1 1.980 1 3.150s-.37 2.260-1 3.150c.46.220.96.350 1.500.350z"/></svg>
<div class="a" style="left:3322.0px;top:1754.0px;width:52px;height:40px;background:#5f6368;border-radius:20px;"></div>
<div class="t" style="top:1762.18px;font-size:24px;left:3334.50px;color:#ffffff;letter-spacing:0.148px;-webkit-text-stroke:.500px #fff;">13</div>
<svg class="a" style="left:3392px;top:1796px" width="48" height="48" viewBox="0 0 24 24"><path fill="#ffffff" d="M4 4h16v12H5.170L4 17.170V4m0-2c-1.100 0-1.990.9-1.990 2L2 22l4-4h14c1.100 0 2-.9 2-2V4c0-1.100-.9-2-2-2H4zm2 10h8v2H6v-2zm0-3h12v2H6V9zm0-3h12v2H6V6z"/></svg>
<svg class="a" style="left:3488.500px;top:1796px" width="48" height="48" viewBox="0 0 24 24"><g fill="none" stroke="#ffffff" stroke-width="2"><path d="M12 3.900L15.300 9.300H8.700z"/><rect x="3.900" y="14.400" width="5.900" height="5.900"/><circle cx="17.100" cy="17.400" r="3.450"/></g></svg>
</body></html>
